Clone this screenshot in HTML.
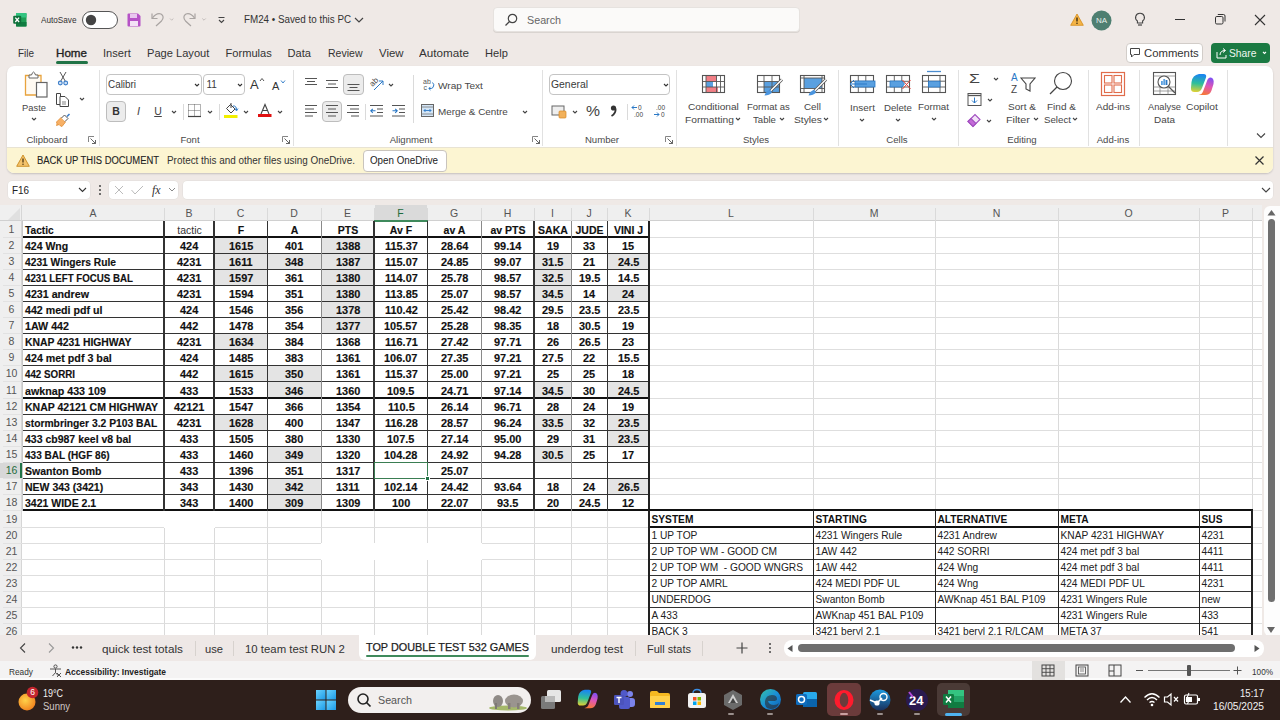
<!DOCTYPE html>
<html><head><meta charset="utf-8"><title>Excel</title><style>
*{box-sizing:border-box;margin:0;padding:0}
html,body{width:1280px;height:720px;overflow:hidden}
body{position:relative;background:#efe9e6;font-family:"Liberation Sans",sans-serif;color:#222}
.t{position:absolute;white-space:pre}
.b{position:absolute}
</style></head><body>
<div class="b" style="left:22px;top:221px;width:1240px;height:414px;background:#fff"></div><div class="b" style="left:0px;top:205px;width:1262px;height:16px;background:#efefef"></div><div class="b" style="left:0px;top:221px;width:22px;height:414px;background:#efefef"></div><div class="b" style="left:0px;top:220px;width:1262px;height:1px;background:#d0d0d0"></div><div class="b" style="left:21px;top:205px;width:1px;height:430px;background:#d6d6d6"></div><svg class="b" style="left:7px;top:207px" width="14" height="13" viewBox="0 0 14 13" fill="none"><path d="M13 1 L13 13 L1 13 Z" fill="#e0e0e0"/></svg><div class="b" style="left:164px;top:221px;width:1px;height:414px;background:#dadada"></div><div class="b" style="left:164px;top:208px;width:1px;height:13px;background:#dadada"></div><div class="b" style="left:214px;top:221px;width:1px;height:414px;background:#dadada"></div><div class="b" style="left:214px;top:208px;width:1px;height:13px;background:#dadada"></div><div class="b" style="left:267px;top:221px;width:1px;height:414px;background:#dadada"></div><div class="b" style="left:267px;top:208px;width:1px;height:13px;background:#dadada"></div><div class="b" style="left:321px;top:221px;width:1px;height:414px;background:#dadada"></div><div class="b" style="left:321px;top:208px;width:1px;height:13px;background:#dadada"></div><div class="b" style="left:374px;top:221px;width:1px;height:414px;background:#dadada"></div><div class="b" style="left:374px;top:208px;width:1px;height:13px;background:#dadada"></div><div class="b" style="left:427px;top:221px;width:1px;height:414px;background:#dadada"></div><div class="b" style="left:427px;top:208px;width:1px;height:13px;background:#dadada"></div><div class="b" style="left:481px;top:221px;width:1px;height:414px;background:#dadada"></div><div class="b" style="left:481px;top:208px;width:1px;height:13px;background:#dadada"></div><div class="b" style="left:534px;top:221px;width:1px;height:414px;background:#dadada"></div><div class="b" style="left:534px;top:208px;width:1px;height:13px;background:#dadada"></div><div class="b" style="left:571px;top:221px;width:1px;height:414px;background:#dadada"></div><div class="b" style="left:571px;top:208px;width:1px;height:13px;background:#dadada"></div><div class="b" style="left:607px;top:221px;width:1px;height:414px;background:#dadada"></div><div class="b" style="left:607px;top:208px;width:1px;height:13px;background:#dadada"></div><div class="b" style="left:649px;top:221px;width:1px;height:414px;background:#dadada"></div><div class="b" style="left:649px;top:208px;width:1px;height:13px;background:#dadada"></div><div class="b" style="left:813px;top:221px;width:1px;height:414px;background:#dadada"></div><div class="b" style="left:813px;top:208px;width:1px;height:13px;background:#dadada"></div><div class="b" style="left:935px;top:221px;width:1px;height:414px;background:#dadada"></div><div class="b" style="left:935px;top:208px;width:1px;height:13px;background:#dadada"></div><div class="b" style="left:1058px;top:221px;width:1px;height:414px;background:#dadada"></div><div class="b" style="left:1058px;top:208px;width:1px;height:13px;background:#dadada"></div><div class="b" style="left:1199px;top:221px;width:1px;height:414px;background:#dadada"></div><div class="b" style="left:1199px;top:208px;width:1px;height:13px;background:#dadada"></div><div class="b" style="left:1252px;top:221px;width:1px;height:414px;background:#dadada"></div><div class="b" style="left:1252px;top:208px;width:1px;height:13px;background:#dadada"></div><div class="b" style="left:22px;top:237px;width:1240px;height:1px;background:#dedede"></div><div class="b" style="left:3px;top:237px;width:19px;height:1px;background:#e2e2e2"></div><div class="b" style="left:22px;top:253px;width:1240px;height:1px;background:#dedede"></div><div class="b" style="left:3px;top:253px;width:19px;height:1px;background:#e2e2e2"></div><div class="b" style="left:22px;top:269px;width:1240px;height:1px;background:#dedede"></div><div class="b" style="left:3px;top:269px;width:19px;height:1px;background:#e2e2e2"></div><div class="b" style="left:22px;top:285px;width:1240px;height:1px;background:#dedede"></div><div class="b" style="left:3px;top:285px;width:19px;height:1px;background:#e2e2e2"></div><div class="b" style="left:22px;top:301px;width:1240px;height:1px;background:#dedede"></div><div class="b" style="left:3px;top:301px;width:19px;height:1px;background:#e2e2e2"></div><div class="b" style="left:22px;top:317px;width:1240px;height:1px;background:#dedede"></div><div class="b" style="left:3px;top:317px;width:19px;height:1px;background:#e2e2e2"></div><div class="b" style="left:22px;top:333px;width:1240px;height:1px;background:#dedede"></div><div class="b" style="left:3px;top:333px;width:19px;height:1px;background:#e2e2e2"></div><div class="b" style="left:22px;top:349px;width:1240px;height:1px;background:#dedede"></div><div class="b" style="left:3px;top:349px;width:19px;height:1px;background:#e2e2e2"></div><div class="b" style="left:22px;top:365px;width:1240px;height:1px;background:#dedede"></div><div class="b" style="left:3px;top:365px;width:19px;height:1px;background:#e2e2e2"></div><div class="b" style="left:22px;top:381px;width:1240px;height:1px;background:#dedede"></div><div class="b" style="left:3px;top:381px;width:19px;height:1px;background:#e2e2e2"></div><div class="b" style="left:22px;top:398px;width:1240px;height:1px;background:#dedede"></div><div class="b" style="left:3px;top:398px;width:19px;height:1px;background:#e2e2e2"></div><div class="b" style="left:22px;top:414px;width:1240px;height:1px;background:#dedede"></div><div class="b" style="left:3px;top:414px;width:19px;height:1px;background:#e2e2e2"></div><div class="b" style="left:22px;top:430px;width:1240px;height:1px;background:#dedede"></div><div class="b" style="left:3px;top:430px;width:19px;height:1px;background:#e2e2e2"></div><div class="b" style="left:22px;top:446px;width:1240px;height:1px;background:#dedede"></div><div class="b" style="left:3px;top:446px;width:19px;height:1px;background:#e2e2e2"></div><div class="b" style="left:22px;top:462px;width:1240px;height:1px;background:#dedede"></div><div class="b" style="left:3px;top:462px;width:19px;height:1px;background:#e2e2e2"></div><div class="b" style="left:22px;top:478px;width:1240px;height:1px;background:#dedede"></div><div class="b" style="left:3px;top:478px;width:19px;height:1px;background:#e2e2e2"></div><div class="b" style="left:22px;top:494px;width:1240px;height:1px;background:#dedede"></div><div class="b" style="left:3px;top:494px;width:19px;height:1px;background:#e2e2e2"></div><div class="b" style="left:22px;top:510px;width:1240px;height:1px;background:#dedede"></div><div class="b" style="left:3px;top:510px;width:19px;height:1px;background:#e2e2e2"></div><div class="b" style="left:22px;top:527px;width:1240px;height:1px;background:#dedede"></div><div class="b" style="left:3px;top:527px;width:19px;height:1px;background:#e2e2e2"></div><div class="b" style="left:22px;top:543px;width:1240px;height:1px;background:#dedede"></div><div class="b" style="left:3px;top:543px;width:19px;height:1px;background:#e2e2e2"></div><div class="b" style="left:22px;top:559px;width:1240px;height:1px;background:#dedede"></div><div class="b" style="left:3px;top:559px;width:19px;height:1px;background:#e2e2e2"></div><div class="b" style="left:22px;top:575px;width:1240px;height:1px;background:#dedede"></div><div class="b" style="left:3px;top:575px;width:19px;height:1px;background:#e2e2e2"></div><div class="b" style="left:22px;top:591px;width:1240px;height:1px;background:#dedede"></div><div class="b" style="left:3px;top:591px;width:19px;height:1px;background:#e2e2e2"></div><div class="b" style="left:22px;top:607px;width:1240px;height:1px;background:#dedede"></div><div class="b" style="left:3px;top:607px;width:19px;height:1px;background:#e2e2e2"></div><div class="b" style="left:22px;top:623px;width:1240px;height:1px;background:#dedede"></div><div class="b" style="left:3px;top:623px;width:19px;height:1px;background:#e2e2e2"></div><div class="b" style="left:375px;top:205px;width:52px;height:16px;background:#dadada"></div><div class="b" style="left:374px;top:220px;width:54px;height:1.5px;background:#3f8a5c"></div><div class="b" style="left:0px;top:463px;width:22px;height:15px;background:#d8d8d8"></div><div class="b" style="left:20px;top:463px;width:2px;height:15px;background:#217346"></div><div class="t" style="left:89.50px;top:206.82px;font-size:10.5px;line-height:12.6px;color:#555;">A</div><div class="t" style="left:185.50px;top:206.82px;font-size:10.5px;line-height:12.6px;color:#555;">B</div><div class="t" style="left:236.71px;top:206.82px;font-size:10.5px;line-height:12.6px;color:#555;">C</div><div class="t" style="left:290.21px;top:206.82px;font-size:10.5px;line-height:12.6px;color:#555;">D</div><div class="t" style="left:344.00px;top:206.82px;font-size:10.5px;line-height:12.6px;color:#555;">E</div><div class="t" style="left:397.29px;top:206.82px;font-size:10.5px;line-height:12.6px;color:#1e6b3c;">F</div><div class="t" style="left:449.92px;top:206.82px;font-size:10.5px;line-height:12.6px;color:#555;">G</div><div class="t" style="left:503.71px;top:206.82px;font-size:10.5px;line-height:12.6px;color:#555;">H</div><div class="t" style="left:551.04px;top:206.82px;font-size:10.5px;line-height:12.6px;color:#555;">I</div><div class="t" style="left:586.38px;top:206.82px;font-size:10.5px;line-height:12.6px;color:#555;">J</div><div class="t" style="left:624.50px;top:206.82px;font-size:10.5px;line-height:12.6px;color:#555;">K</div><div class="t" style="left:728.08px;top:206.82px;font-size:10.5px;line-height:12.6px;color:#555;">L</div><div class="t" style="left:869.63px;top:206.82px;font-size:10.5px;line-height:12.6px;color:#555;">M</div><div class="t" style="left:992.71px;top:206.82px;font-size:10.5px;line-height:12.6px;color:#555;">N</div><div class="t" style="left:1124.42px;top:206.82px;font-size:10.5px;line-height:12.6px;color:#555;">O</div><div class="t" style="left:1222.00px;top:206.82px;font-size:10.5px;line-height:12.6px;color:#555;">P</div><div class="t" style="left:8.58px;top:223.32px;font-size:10.5px;line-height:12.6px;color:#555;">1</div><div class="t" style="left:8.58px;top:239.32px;font-size:10.5px;line-height:12.6px;color:#555;">2</div><div class="t" style="left:8.58px;top:255.32px;font-size:10.5px;line-height:12.6px;color:#555;">3</div><div class="t" style="left:8.58px;top:271.32px;font-size:10.5px;line-height:12.6px;color:#555;">4</div><div class="t" style="left:8.58px;top:287.32px;font-size:10.5px;line-height:12.6px;color:#555;">5</div><div class="t" style="left:8.58px;top:303.32px;font-size:10.5px;line-height:12.6px;color:#555;">6</div><div class="t" style="left:8.58px;top:319.32px;font-size:10.5px;line-height:12.6px;color:#555;">7</div><div class="t" style="left:8.58px;top:335.32px;font-size:10.5px;line-height:12.6px;color:#555;">8</div><div class="t" style="left:8.58px;top:351.32px;font-size:10.5px;line-height:12.6px;color:#555;">9</div><div class="t" style="left:5.66px;top:367.32px;font-size:10.5px;line-height:12.6px;color:#555;">10</div><div class="t" style="left:6.05px;top:383.82px;font-size:10.5px;line-height:12.6px;color:#555;">11</div><div class="t" style="left:5.66px;top:400.32px;font-size:10.5px;line-height:12.6px;color:#555;">12</div><div class="t" style="left:5.66px;top:416.32px;font-size:10.5px;line-height:12.6px;color:#555;">13</div><div class="t" style="left:5.66px;top:432.32px;font-size:10.5px;line-height:12.6px;color:#555;">14</div><div class="t" style="left:5.66px;top:448.32px;font-size:10.5px;line-height:12.6px;color:#555;">15</div><div class="t" style="left:5.66px;top:464.32px;font-size:10.5px;line-height:12.6px;color:#1e6b3c;">16</div><div class="t" style="left:5.66px;top:480.32px;font-size:10.5px;line-height:12.6px;color:#555;">17</div><div class="t" style="left:5.66px;top:496.32px;font-size:10.5px;line-height:12.6px;color:#555;">18</div><div class="t" style="left:5.66px;top:512.82px;font-size:10.5px;line-height:12.6px;color:#555;">19</div><div class="t" style="left:5.66px;top:529.32px;font-size:10.5px;line-height:12.6px;color:#555;">20</div><div class="t" style="left:5.66px;top:545.32px;font-size:10.5px;line-height:12.6px;color:#555;">21</div><div class="t" style="left:5.66px;top:561.32px;font-size:10.5px;line-height:12.6px;color:#555;">22</div><div class="t" style="left:5.66px;top:577.32px;font-size:10.5px;line-height:12.6px;color:#555;">23</div><div class="t" style="left:5.66px;top:593.32px;font-size:10.5px;line-height:12.6px;color:#555;">24</div><div class="t" style="left:5.66px;top:609.32px;font-size:10.5px;line-height:12.6px;color:#555;">25</div><div class="t" style="left:5.66px;top:625.32px;font-size:10.5px;line-height:12.6px;color:#555;">26</div><div class="b" style="left:215px;top:238px;width:52px;height:15px;background:#e4e4e4"></div><div class="b" style="left:322px;top:238px;width:52px;height:15px;background:#e4e4e4"></div><div class="b" style="left:215px;top:254px;width:52px;height:15px;background:#e4e4e4"></div><div class="b" style="left:268px;top:254px;width:53px;height:15px;background:#e4e4e4"></div><div class="b" style="left:322px;top:254px;width:52px;height:15px;background:#e4e4e4"></div><div class="b" style="left:535px;top:254px;width:36px;height:15px;background:#e4e4e4"></div><div class="b" style="left:608px;top:254px;width:41px;height:15px;background:#e4e4e4"></div><div class="b" style="left:215px;top:270px;width:52px;height:15px;background:#e4e4e4"></div><div class="b" style="left:322px;top:270px;width:52px;height:15px;background:#e4e4e4"></div><div class="b" style="left:535px;top:270px;width:36px;height:15px;background:#e4e4e4"></div><div class="b" style="left:322px;top:286px;width:52px;height:15px;background:#e4e4e4"></div><div class="b" style="left:535px;top:286px;width:36px;height:15px;background:#e4e4e4"></div><div class="b" style="left:608px;top:286px;width:41px;height:15px;background:#e4e4e4"></div><div class="b" style="left:322px;top:302px;width:52px;height:15px;background:#e4e4e4"></div><div class="b" style="left:322px;top:318px;width:52px;height:15px;background:#e4e4e4"></div><div class="b" style="left:215px;top:334px;width:52px;height:15px;background:#e4e4e4"></div><div class="b" style="left:215px;top:366px;width:52px;height:15px;background:#e4e4e4"></div><div class="b" style="left:268px;top:366px;width:53px;height:15px;background:#e4e4e4"></div><div class="b" style="left:268px;top:382px;width:53px;height:16px;background:#e4e4e4"></div><div class="b" style="left:535px;top:382px;width:36px;height:16px;background:#e4e4e4"></div><div class="b" style="left:608px;top:382px;width:41px;height:16px;background:#e4e4e4"></div><div class="b" style="left:215px;top:415px;width:52px;height:15px;background:#e4e4e4"></div><div class="b" style="left:535px;top:415px;width:36px;height:15px;background:#e4e4e4"></div><div class="b" style="left:608px;top:415px;width:41px;height:15px;background:#e4e4e4"></div><div class="b" style="left:608px;top:431px;width:41px;height:15px;background:#e4e4e4"></div><div class="b" style="left:268px;top:447px;width:53px;height:15px;background:#e4e4e4"></div><div class="b" style="left:535px;top:447px;width:36px;height:15px;background:#e4e4e4"></div><div class="b" style="left:268px;top:479px;width:53px;height:15px;background:#e4e4e4"></div><div class="b" style="left:608px;top:479px;width:41px;height:15px;background:#e4e4e4"></div><div class="b" style="left:268px;top:495px;width:53px;height:15px;background:#e4e4e4"></div><div class="b" style="left:22px;top:236px;width:628px;height:2px;background:#111"></div><div class="b" style="left:22px;top:253px;width:628px;height:1px;background:#333"></div><div class="b" style="left:22px;top:269px;width:628px;height:1px;background:#333"></div><div class="b" style="left:22px;top:285px;width:628px;height:1px;background:#333"></div><div class="b" style="left:22px;top:301px;width:628px;height:1px;background:#333"></div><div class="b" style="left:22px;top:317px;width:628px;height:1px;background:#333"></div><div class="b" style="left:22px;top:333px;width:628px;height:1px;background:#333"></div><div class="b" style="left:22px;top:349px;width:628px;height:1px;background:#333"></div><div class="b" style="left:22px;top:365px;width:628px;height:1px;background:#333"></div><div class="b" style="left:22px;top:381px;width:628px;height:1px;background:#333"></div><div class="b" style="left:22px;top:397px;width:628px;height:2px;background:#111"></div><div class="b" style="left:22px;top:414px;width:628px;height:1px;background:#333"></div><div class="b" style="left:22px;top:430px;width:628px;height:1px;background:#333"></div><div class="b" style="left:22px;top:446px;width:628px;height:1px;background:#333"></div><div class="b" style="left:22px;top:462px;width:628px;height:1px;background:#333"></div><div class="b" style="left:22px;top:478px;width:628px;height:1px;background:#333"></div><div class="b" style="left:22px;top:494px;width:628px;height:1px;background:#333"></div><div class="b" style="left:22px;top:509px;width:628px;height:2px;background:#111"></div><div class="b" style="left:22px;top:221px;width:1px;height:290px;background:#c8c8c8"></div><div class="b" style="left:163px;top:221px;width:2px;height:290px;background:#333"></div><div class="b" style="left:213px;top:221px;width:2px;height:290px;background:#333"></div><div class="b" style="left:267px;top:221px;width:1px;height:290px;background:#333"></div><div class="b" style="left:321px;top:221px;width:1px;height:290px;background:#8a8a8a"></div><div class="b" style="left:373px;top:221px;width:2px;height:290px;background:#333"></div><div class="b" style="left:427px;top:221px;width:1px;height:290px;background:#333"></div><div class="b" style="left:481px;top:221px;width:1px;height:290px;background:#8a8a8a"></div><div class="b" style="left:533px;top:221px;width:2px;height:290px;background:#333"></div><div class="b" style="left:571px;top:221px;width:1px;height:290px;background:#8a8a8a"></div><div class="b" style="left:607px;top:221px;width:1px;height:290px;background:#333"></div><div class="b" style="left:648px;top:221px;width:2px;height:290px;background:#222"></div><div class="t" style="left:25.00px;top:224.02px;font-size:10.5px;line-height:12.6px;color:#111;font-weight:bold;transform:scaleX(0.971);transform-origin:0 0;-webkit-text-stroke:0.15px #111;">Tactic</div><div class="t" style="left:177.25px;top:224.02px;font-size:10.5px;line-height:12.6px;color:#333;">tactic</div><div class="t" style="left:237.79px;top:224.02px;font-size:10.5px;line-height:12.6px;color:#111;font-weight:bold;-webkit-text-stroke:0.15px #111;">F</div><div class="t" style="left:290.71px;top:224.02px;font-size:10.5px;line-height:12.6px;color:#111;font-weight:bold;-webkit-text-stroke:0.15px #111;">A</div><div class="t" style="left:337.79px;top:224.02px;font-size:10.5px;line-height:12.6px;color:#111;font-weight:bold;-webkit-text-stroke:0.15px #111;">PTS</div><div class="t" style="left:389.82px;top:224.02px;font-size:10.5px;line-height:12.6px;color:#111;font-weight:bold;-webkit-text-stroke:0.15px #111;">Av F</div><div class="t" style="left:443.61px;top:224.02px;font-size:10.5px;line-height:12.6px;color:#111;font-weight:bold;-webkit-text-stroke:0.15px #111;">av A</div><div class="t" style="left:490.49px;top:224.02px;font-size:10.5px;line-height:12.6px;color:#111;font-weight:bold;-webkit-text-stroke:0.15px #111;">av PTS</div><div class="t" style="left:538.12px;top:224.02px;font-size:10.5px;line-height:12.6px;color:#111;font-weight:bold;-webkit-text-stroke:0.15px #111;">SAKA</div><div class="t" style="left:575.50px;top:224.02px;font-size:10.5px;line-height:12.6px;color:#111;font-weight:bold;-webkit-text-stroke:0.15px #111;">JUDE</div><div class="t" style="left:613.91px;top:224.02px;font-size:10.5px;line-height:12.6px;color:#111;font-weight:bold;-webkit-text-stroke:0.15px #111;">VINI J</div><div class="t" style="left:25.00px;top:240.02px;font-size:10.5px;line-height:12.6px;color:#111;font-weight:bold;-webkit-text-stroke:0.15px #111;">424 Wng</div><div class="t" style="left:180.39px;top:240.02px;font-size:10.5px;line-height:12.6px;color:#111;font-weight:bold;transform:scaleX(1.040);transform-origin:0 0;-webkit-text-stroke:0.15px #111;">424</div><div class="t" style="left:228.85px;top:240.02px;font-size:10.5px;line-height:12.6px;color:#111;font-weight:bold;transform:scaleX(1.040);transform-origin:0 0;-webkit-text-stroke:0.15px #111;">1615</div><div class="t" style="left:285.39px;top:240.02px;font-size:10.5px;line-height:12.6px;color:#111;font-weight:bold;transform:scaleX(1.040);transform-origin:0 0;-webkit-text-stroke:0.15px #111;">401</div><div class="t" style="left:335.85px;top:240.02px;font-size:10.5px;line-height:12.6px;color:#111;font-weight:bold;transform:scaleX(1.040);transform-origin:0 0;-webkit-text-stroke:0.15px #111;">1388</div><div class="t" style="left:384.60px;top:240.02px;font-size:10.5px;line-height:12.6px;color:#111;font-weight:bold;transform:scaleX(1.040);transform-origin:0 0;-webkit-text-stroke:0.15px #111;">115.37</div><div class="t" style="left:440.84px;top:240.02px;font-size:10.5px;line-height:12.6px;color:#111;font-weight:bold;transform:scaleX(1.040);transform-origin:0 0;-webkit-text-stroke:0.15px #111;">28.64</div><div class="t" style="left:494.34px;top:240.02px;font-size:10.5px;line-height:12.6px;color:#111;font-weight:bold;transform:scaleX(1.040);transform-origin:0 0;-webkit-text-stroke:0.15px #111;">99.14</div><div class="t" style="left:546.93px;top:240.02px;font-size:10.5px;line-height:12.6px;color:#111;font-weight:bold;transform:scaleX(1.040);transform-origin:0 0;-webkit-text-stroke:0.15px #111;">19</div><div class="t" style="left:583.43px;top:240.02px;font-size:10.5px;line-height:12.6px;color:#111;font-weight:bold;transform:scaleX(1.040);transform-origin:0 0;-webkit-text-stroke:0.15px #111;">33</div><div class="t" style="left:622.43px;top:240.02px;font-size:10.5px;line-height:12.6px;color:#111;font-weight:bold;transform:scaleX(1.040);transform-origin:0 0;-webkit-text-stroke:0.15px #111;">15</div><div class="t" style="left:25.00px;top:256.02px;font-size:10.5px;line-height:12.6px;color:#111;font-weight:bold;transform:scaleX(0.975);transform-origin:0 0;-webkit-text-stroke:0.15px #111;">4231 Wingers Rule</div><div class="t" style="left:177.35px;top:256.02px;font-size:10.5px;line-height:12.6px;color:#111;font-weight:bold;transform:scaleX(1.040);transform-origin:0 0;-webkit-text-stroke:0.15px #111;">4231</div><div class="t" style="left:229.15px;top:256.02px;font-size:10.5px;line-height:12.6px;color:#111;font-weight:bold;transform:scaleX(1.040);transform-origin:0 0;-webkit-text-stroke:0.15px #111;">1611</div><div class="t" style="left:285.39px;top:256.02px;font-size:10.5px;line-height:12.6px;color:#111;font-weight:bold;transform:scaleX(1.040);transform-origin:0 0;-webkit-text-stroke:0.15px #111;">348</div><div class="t" style="left:335.85px;top:256.02px;font-size:10.5px;line-height:12.6px;color:#111;font-weight:bold;transform:scaleX(1.040);transform-origin:0 0;-webkit-text-stroke:0.15px #111;">1387</div><div class="t" style="left:384.60px;top:256.02px;font-size:10.5px;line-height:12.6px;color:#111;font-weight:bold;transform:scaleX(1.040);transform-origin:0 0;-webkit-text-stroke:0.15px #111;">115.07</div><div class="t" style="left:440.84px;top:256.02px;font-size:10.5px;line-height:12.6px;color:#111;font-weight:bold;transform:scaleX(1.040);transform-origin:0 0;-webkit-text-stroke:0.15px #111;">24.85</div><div class="t" style="left:494.34px;top:256.02px;font-size:10.5px;line-height:12.6px;color:#111;font-weight:bold;transform:scaleX(1.040);transform-origin:0 0;-webkit-text-stroke:0.15px #111;">99.07</div><div class="t" style="left:542.37px;top:256.02px;font-size:10.5px;line-height:12.6px;color:#111;font-weight:bold;transform:scaleX(1.040);transform-origin:0 0;-webkit-text-stroke:0.15px #111;">31.5</div><div class="t" style="left:583.43px;top:256.02px;font-size:10.5px;line-height:12.6px;color:#111;font-weight:bold;transform:scaleX(1.040);transform-origin:0 0;-webkit-text-stroke:0.15px #111;">21</div><div class="t" style="left:617.87px;top:256.02px;font-size:10.5px;line-height:12.6px;color:#111;font-weight:bold;transform:scaleX(1.040);transform-origin:0 0;-webkit-text-stroke:0.15px #111;">24.5</div><div class="t" style="left:25.00px;top:272.02px;font-size:10.5px;line-height:12.6px;color:#111;font-weight:bold;transform:scaleX(0.925);transform-origin:0 0;-webkit-text-stroke:0.15px #111;">4231 LEFT FOCUS BAL</div><div class="t" style="left:177.35px;top:272.02px;font-size:10.5px;line-height:12.6px;color:#111;font-weight:bold;transform:scaleX(1.040);transform-origin:0 0;-webkit-text-stroke:0.15px #111;">4231</div><div class="t" style="left:228.85px;top:272.02px;font-size:10.5px;line-height:12.6px;color:#111;font-weight:bold;transform:scaleX(1.040);transform-origin:0 0;-webkit-text-stroke:0.15px #111;">1597</div><div class="t" style="left:285.39px;top:272.02px;font-size:10.5px;line-height:12.6px;color:#111;font-weight:bold;transform:scaleX(1.040);transform-origin:0 0;-webkit-text-stroke:0.15px #111;">361</div><div class="t" style="left:335.85px;top:272.02px;font-size:10.5px;line-height:12.6px;color:#111;font-weight:bold;transform:scaleX(1.040);transform-origin:0 0;-webkit-text-stroke:0.15px #111;">1380</div><div class="t" style="left:384.60px;top:272.02px;font-size:10.5px;line-height:12.6px;color:#111;font-weight:bold;transform:scaleX(1.040);transform-origin:0 0;-webkit-text-stroke:0.15px #111;">114.07</div><div class="t" style="left:440.84px;top:272.02px;font-size:10.5px;line-height:12.6px;color:#111;font-weight:bold;transform:scaleX(1.040);transform-origin:0 0;-webkit-text-stroke:0.15px #111;">25.78</div><div class="t" style="left:494.34px;top:272.02px;font-size:10.5px;line-height:12.6px;color:#111;font-weight:bold;transform:scaleX(1.040);transform-origin:0 0;-webkit-text-stroke:0.15px #111;">98.57</div><div class="t" style="left:542.37px;top:272.02px;font-size:10.5px;line-height:12.6px;color:#111;font-weight:bold;transform:scaleX(1.040);transform-origin:0 0;-webkit-text-stroke:0.15px #111;">32.5</div><div class="t" style="left:578.87px;top:272.02px;font-size:10.5px;line-height:12.6px;color:#111;font-weight:bold;transform:scaleX(1.040);transform-origin:0 0;-webkit-text-stroke:0.15px #111;">19.5</div><div class="t" style="left:617.87px;top:272.02px;font-size:10.5px;line-height:12.6px;color:#111;font-weight:bold;transform:scaleX(1.040);transform-origin:0 0;-webkit-text-stroke:0.15px #111;">14.5</div><div class="t" style="left:25.00px;top:288.02px;font-size:10.5px;line-height:12.6px;color:#111;font-weight:bold;transform:scaleX(1.015);transform-origin:0 0;-webkit-text-stroke:0.15px #111;">4231 andrew</div><div class="t" style="left:177.35px;top:288.02px;font-size:10.5px;line-height:12.6px;color:#111;font-weight:bold;transform:scaleX(1.040);transform-origin:0 0;-webkit-text-stroke:0.15px #111;">4231</div><div class="t" style="left:228.85px;top:288.02px;font-size:10.5px;line-height:12.6px;color:#111;font-weight:bold;transform:scaleX(1.040);transform-origin:0 0;-webkit-text-stroke:0.15px #111;">1594</div><div class="t" style="left:285.39px;top:288.02px;font-size:10.5px;line-height:12.6px;color:#111;font-weight:bold;transform:scaleX(1.040);transform-origin:0 0;-webkit-text-stroke:0.15px #111;">351</div><div class="t" style="left:335.85px;top:288.02px;font-size:10.5px;line-height:12.6px;color:#111;font-weight:bold;transform:scaleX(1.040);transform-origin:0 0;-webkit-text-stroke:0.15px #111;">1380</div><div class="t" style="left:384.60px;top:288.02px;font-size:10.5px;line-height:12.6px;color:#111;font-weight:bold;transform:scaleX(1.040);transform-origin:0 0;-webkit-text-stroke:0.15px #111;">113.85</div><div class="t" style="left:440.84px;top:288.02px;font-size:10.5px;line-height:12.6px;color:#111;font-weight:bold;transform:scaleX(1.040);transform-origin:0 0;-webkit-text-stroke:0.15px #111;">25.07</div><div class="t" style="left:494.34px;top:288.02px;font-size:10.5px;line-height:12.6px;color:#111;font-weight:bold;transform:scaleX(1.040);transform-origin:0 0;-webkit-text-stroke:0.15px #111;">98.57</div><div class="t" style="left:542.37px;top:288.02px;font-size:10.5px;line-height:12.6px;color:#111;font-weight:bold;transform:scaleX(1.040);transform-origin:0 0;-webkit-text-stroke:0.15px #111;">34.5</div><div class="t" style="left:583.43px;top:288.02px;font-size:10.5px;line-height:12.6px;color:#111;font-weight:bold;transform:scaleX(1.040);transform-origin:0 0;-webkit-text-stroke:0.15px #111;">14</div><div class="t" style="left:622.43px;top:288.02px;font-size:10.5px;line-height:12.6px;color:#111;font-weight:bold;transform:scaleX(1.040);transform-origin:0 0;-webkit-text-stroke:0.15px #111;">24</div><div class="t" style="left:25.00px;top:304.02px;font-size:10.5px;line-height:12.6px;color:#111;font-weight:bold;transform:scaleX(1.013);transform-origin:0 0;-webkit-text-stroke:0.15px #111;">442 medi pdf ul</div><div class="t" style="left:180.39px;top:304.02px;font-size:10.5px;line-height:12.6px;color:#111;font-weight:bold;transform:scaleX(1.040);transform-origin:0 0;-webkit-text-stroke:0.15px #111;">424</div><div class="t" style="left:228.85px;top:304.02px;font-size:10.5px;line-height:12.6px;color:#111;font-weight:bold;transform:scaleX(1.040);transform-origin:0 0;-webkit-text-stroke:0.15px #111;">1546</div><div class="t" style="left:285.39px;top:304.02px;font-size:10.5px;line-height:12.6px;color:#111;font-weight:bold;transform:scaleX(1.040);transform-origin:0 0;-webkit-text-stroke:0.15px #111;">356</div><div class="t" style="left:335.85px;top:304.02px;font-size:10.5px;line-height:12.6px;color:#111;font-weight:bold;transform:scaleX(1.040);transform-origin:0 0;-webkit-text-stroke:0.15px #111;">1378</div><div class="t" style="left:384.60px;top:304.02px;font-size:10.5px;line-height:12.6px;color:#111;font-weight:bold;transform:scaleX(1.040);transform-origin:0 0;-webkit-text-stroke:0.15px #111;">110.42</div><div class="t" style="left:440.84px;top:304.02px;font-size:10.5px;line-height:12.6px;color:#111;font-weight:bold;transform:scaleX(1.040);transform-origin:0 0;-webkit-text-stroke:0.15px #111;">25.42</div><div class="t" style="left:494.34px;top:304.02px;font-size:10.5px;line-height:12.6px;color:#111;font-weight:bold;transform:scaleX(1.040);transform-origin:0 0;-webkit-text-stroke:0.15px #111;">98.42</div><div class="t" style="left:542.37px;top:304.02px;font-size:10.5px;line-height:12.6px;color:#111;font-weight:bold;transform:scaleX(1.040);transform-origin:0 0;-webkit-text-stroke:0.15px #111;">29.5</div><div class="t" style="left:578.87px;top:304.02px;font-size:10.5px;line-height:12.6px;color:#111;font-weight:bold;transform:scaleX(1.040);transform-origin:0 0;-webkit-text-stroke:0.15px #111;">23.5</div><div class="t" style="left:617.87px;top:304.02px;font-size:10.5px;line-height:12.6px;color:#111;font-weight:bold;transform:scaleX(1.040);transform-origin:0 0;-webkit-text-stroke:0.15px #111;">23.5</div><div class="t" style="left:25.00px;top:320.02px;font-size:10.5px;line-height:12.6px;color:#111;font-weight:bold;transform:scaleX(1.018);transform-origin:0 0;-webkit-text-stroke:0.15px #111;">1AW 442</div><div class="t" style="left:180.39px;top:320.02px;font-size:10.5px;line-height:12.6px;color:#111;font-weight:bold;transform:scaleX(1.040);transform-origin:0 0;-webkit-text-stroke:0.15px #111;">442</div><div class="t" style="left:228.85px;top:320.02px;font-size:10.5px;line-height:12.6px;color:#111;font-weight:bold;transform:scaleX(1.040);transform-origin:0 0;-webkit-text-stroke:0.15px #111;">1478</div><div class="t" style="left:285.39px;top:320.02px;font-size:10.5px;line-height:12.6px;color:#111;font-weight:bold;transform:scaleX(1.040);transform-origin:0 0;-webkit-text-stroke:0.15px #111;">354</div><div class="t" style="left:335.85px;top:320.02px;font-size:10.5px;line-height:12.6px;color:#111;font-weight:bold;transform:scaleX(1.040);transform-origin:0 0;-webkit-text-stroke:0.15px #111;">1377</div><div class="t" style="left:384.30px;top:320.02px;font-size:10.5px;line-height:12.6px;color:#111;font-weight:bold;transform:scaleX(1.040);transform-origin:0 0;-webkit-text-stroke:0.15px #111;">105.57</div><div class="t" style="left:440.84px;top:320.02px;font-size:10.5px;line-height:12.6px;color:#111;font-weight:bold;transform:scaleX(1.040);transform-origin:0 0;-webkit-text-stroke:0.15px #111;">25.28</div><div class="t" style="left:494.34px;top:320.02px;font-size:10.5px;line-height:12.6px;color:#111;font-weight:bold;transform:scaleX(1.040);transform-origin:0 0;-webkit-text-stroke:0.15px #111;">98.35</div><div class="t" style="left:546.93px;top:320.02px;font-size:10.5px;line-height:12.6px;color:#111;font-weight:bold;transform:scaleX(1.040);transform-origin:0 0;-webkit-text-stroke:0.15px #111;">18</div><div class="t" style="left:578.87px;top:320.02px;font-size:10.5px;line-height:12.6px;color:#111;font-weight:bold;transform:scaleX(1.040);transform-origin:0 0;-webkit-text-stroke:0.15px #111;">30.5</div><div class="t" style="left:622.43px;top:320.02px;font-size:10.5px;line-height:12.6px;color:#111;font-weight:bold;transform:scaleX(1.040);transform-origin:0 0;-webkit-text-stroke:0.15px #111;">19</div><div class="t" style="left:25.00px;top:336.02px;font-size:10.5px;line-height:12.6px;color:#111;font-weight:bold;transform:scaleX(0.986);transform-origin:0 0;-webkit-text-stroke:0.15px #111;">KNAP 4231 HIGHWAY</div><div class="t" style="left:177.35px;top:336.02px;font-size:10.5px;line-height:12.6px;color:#111;font-weight:bold;transform:scaleX(1.040);transform-origin:0 0;-webkit-text-stroke:0.15px #111;">4231</div><div class="t" style="left:228.85px;top:336.02px;font-size:10.5px;line-height:12.6px;color:#111;font-weight:bold;transform:scaleX(1.040);transform-origin:0 0;-webkit-text-stroke:0.15px #111;">1634</div><div class="t" style="left:285.39px;top:336.02px;font-size:10.5px;line-height:12.6px;color:#111;font-weight:bold;transform:scaleX(1.040);transform-origin:0 0;-webkit-text-stroke:0.15px #111;">384</div><div class="t" style="left:335.85px;top:336.02px;font-size:10.5px;line-height:12.6px;color:#111;font-weight:bold;transform:scaleX(1.040);transform-origin:0 0;-webkit-text-stroke:0.15px #111;">1368</div><div class="t" style="left:384.60px;top:336.02px;font-size:10.5px;line-height:12.6px;color:#111;font-weight:bold;transform:scaleX(1.040);transform-origin:0 0;-webkit-text-stroke:0.15px #111;">116.71</div><div class="t" style="left:440.84px;top:336.02px;font-size:10.5px;line-height:12.6px;color:#111;font-weight:bold;transform:scaleX(1.040);transform-origin:0 0;-webkit-text-stroke:0.15px #111;">27.42</div><div class="t" style="left:494.34px;top:336.02px;font-size:10.5px;line-height:12.6px;color:#111;font-weight:bold;transform:scaleX(1.040);transform-origin:0 0;-webkit-text-stroke:0.15px #111;">97.71</div><div class="t" style="left:546.93px;top:336.02px;font-size:10.5px;line-height:12.6px;color:#111;font-weight:bold;transform:scaleX(1.040);transform-origin:0 0;-webkit-text-stroke:0.15px #111;">26</div><div class="t" style="left:578.87px;top:336.02px;font-size:10.5px;line-height:12.6px;color:#111;font-weight:bold;transform:scaleX(1.040);transform-origin:0 0;-webkit-text-stroke:0.15px #111;">26.5</div><div class="t" style="left:622.43px;top:336.02px;font-size:10.5px;line-height:12.6px;color:#111;font-weight:bold;transform:scaleX(1.040);transform-origin:0 0;-webkit-text-stroke:0.15px #111;">23</div><div class="t" style="left:25.00px;top:352.02px;font-size:10.5px;line-height:12.6px;color:#111;font-weight:bold;transform:scaleX(1.019);transform-origin:0 0;-webkit-text-stroke:0.15px #111;">424 met pdf 3 bal</div><div class="t" style="left:180.39px;top:352.02px;font-size:10.5px;line-height:12.6px;color:#111;font-weight:bold;transform:scaleX(1.040);transform-origin:0 0;-webkit-text-stroke:0.15px #111;">424</div><div class="t" style="left:228.85px;top:352.02px;font-size:10.5px;line-height:12.6px;color:#111;font-weight:bold;transform:scaleX(1.040);transform-origin:0 0;-webkit-text-stroke:0.15px #111;">1485</div><div class="t" style="left:285.39px;top:352.02px;font-size:10.5px;line-height:12.6px;color:#111;font-weight:bold;transform:scaleX(1.040);transform-origin:0 0;-webkit-text-stroke:0.15px #111;">383</div><div class="t" style="left:335.85px;top:352.02px;font-size:10.5px;line-height:12.6px;color:#111;font-weight:bold;transform:scaleX(1.040);transform-origin:0 0;-webkit-text-stroke:0.15px #111;">1361</div><div class="t" style="left:384.30px;top:352.02px;font-size:10.5px;line-height:12.6px;color:#111;font-weight:bold;transform:scaleX(1.040);transform-origin:0 0;-webkit-text-stroke:0.15px #111;">106.07</div><div class="t" style="left:440.84px;top:352.02px;font-size:10.5px;line-height:12.6px;color:#111;font-weight:bold;transform:scaleX(1.040);transform-origin:0 0;-webkit-text-stroke:0.15px #111;">27.35</div><div class="t" style="left:494.34px;top:352.02px;font-size:10.5px;line-height:12.6px;color:#111;font-weight:bold;transform:scaleX(1.040);transform-origin:0 0;-webkit-text-stroke:0.15px #111;">97.21</div><div class="t" style="left:542.37px;top:352.02px;font-size:10.5px;line-height:12.6px;color:#111;font-weight:bold;transform:scaleX(1.040);transform-origin:0 0;-webkit-text-stroke:0.15px #111;">27.5</div><div class="t" style="left:583.43px;top:352.02px;font-size:10.5px;line-height:12.6px;color:#111;font-weight:bold;transform:scaleX(1.040);transform-origin:0 0;-webkit-text-stroke:0.15px #111;">22</div><div class="t" style="left:617.87px;top:352.02px;font-size:10.5px;line-height:12.6px;color:#111;font-weight:bold;transform:scaleX(1.040);transform-origin:0 0;-webkit-text-stroke:0.15px #111;">15.5</div><div class="t" style="left:25.00px;top:368.02px;font-size:10.5px;line-height:12.6px;color:#111;font-weight:bold;transform:scaleX(0.931);transform-origin:0 0;-webkit-text-stroke:0.15px #111;">442 SORRI</div><div class="t" style="left:180.39px;top:368.02px;font-size:10.5px;line-height:12.6px;color:#111;font-weight:bold;transform:scaleX(1.040);transform-origin:0 0;-webkit-text-stroke:0.15px #111;">442</div><div class="t" style="left:228.85px;top:368.02px;font-size:10.5px;line-height:12.6px;color:#111;font-weight:bold;transform:scaleX(1.040);transform-origin:0 0;-webkit-text-stroke:0.15px #111;">1615</div><div class="t" style="left:285.39px;top:368.02px;font-size:10.5px;line-height:12.6px;color:#111;font-weight:bold;transform:scaleX(1.040);transform-origin:0 0;-webkit-text-stroke:0.15px #111;">350</div><div class="t" style="left:335.85px;top:368.02px;font-size:10.5px;line-height:12.6px;color:#111;font-weight:bold;transform:scaleX(1.040);transform-origin:0 0;-webkit-text-stroke:0.15px #111;">1361</div><div class="t" style="left:384.60px;top:368.02px;font-size:10.5px;line-height:12.6px;color:#111;font-weight:bold;transform:scaleX(1.040);transform-origin:0 0;-webkit-text-stroke:0.15px #111;">115.37</div><div class="t" style="left:440.84px;top:368.02px;font-size:10.5px;line-height:12.6px;color:#111;font-weight:bold;transform:scaleX(1.040);transform-origin:0 0;-webkit-text-stroke:0.15px #111;">25.00</div><div class="t" style="left:494.34px;top:368.02px;font-size:10.5px;line-height:12.6px;color:#111;font-weight:bold;transform:scaleX(1.040);transform-origin:0 0;-webkit-text-stroke:0.15px #111;">97.21</div><div class="t" style="left:546.93px;top:368.02px;font-size:10.5px;line-height:12.6px;color:#111;font-weight:bold;transform:scaleX(1.040);transform-origin:0 0;-webkit-text-stroke:0.15px #111;">25</div><div class="t" style="left:583.43px;top:368.02px;font-size:10.5px;line-height:12.6px;color:#111;font-weight:bold;transform:scaleX(1.040);transform-origin:0 0;-webkit-text-stroke:0.15px #111;">25</div><div class="t" style="left:622.43px;top:368.02px;font-size:10.5px;line-height:12.6px;color:#111;font-weight:bold;transform:scaleX(1.040);transform-origin:0 0;-webkit-text-stroke:0.15px #111;">18</div><div class="t" style="left:25.00px;top:384.52px;font-size:10.5px;line-height:12.6px;color:#111;font-weight:bold;transform:scaleX(1.019);transform-origin:0 0;-webkit-text-stroke:0.15px #111;">awknap 433 109</div><div class="t" style="left:180.39px;top:384.52px;font-size:10.5px;line-height:12.6px;color:#111;font-weight:bold;transform:scaleX(1.040);transform-origin:0 0;-webkit-text-stroke:0.15px #111;">433</div><div class="t" style="left:228.85px;top:384.52px;font-size:10.5px;line-height:12.6px;color:#111;font-weight:bold;transform:scaleX(1.040);transform-origin:0 0;-webkit-text-stroke:0.15px #111;">1533</div><div class="t" style="left:285.39px;top:384.52px;font-size:10.5px;line-height:12.6px;color:#111;font-weight:bold;transform:scaleX(1.040);transform-origin:0 0;-webkit-text-stroke:0.15px #111;">346</div><div class="t" style="left:335.85px;top:384.52px;font-size:10.5px;line-height:12.6px;color:#111;font-weight:bold;transform:scaleX(1.040);transform-origin:0 0;-webkit-text-stroke:0.15px #111;">1360</div><div class="t" style="left:387.34px;top:384.52px;font-size:10.5px;line-height:12.6px;color:#111;font-weight:bold;transform:scaleX(1.040);transform-origin:0 0;-webkit-text-stroke:0.15px #111;">109.5</div><div class="t" style="left:440.84px;top:384.52px;font-size:10.5px;line-height:12.6px;color:#111;font-weight:bold;transform:scaleX(1.040);transform-origin:0 0;-webkit-text-stroke:0.15px #111;">24.71</div><div class="t" style="left:494.34px;top:384.52px;font-size:10.5px;line-height:12.6px;color:#111;font-weight:bold;transform:scaleX(1.040);transform-origin:0 0;-webkit-text-stroke:0.15px #111;">97.14</div><div class="t" style="left:542.37px;top:384.52px;font-size:10.5px;line-height:12.6px;color:#111;font-weight:bold;transform:scaleX(1.040);transform-origin:0 0;-webkit-text-stroke:0.15px #111;">34.5</div><div class="t" style="left:583.43px;top:384.52px;font-size:10.5px;line-height:12.6px;color:#111;font-weight:bold;transform:scaleX(1.040);transform-origin:0 0;-webkit-text-stroke:0.15px #111;">30</div><div class="t" style="left:617.87px;top:384.52px;font-size:10.5px;line-height:12.6px;color:#111;font-weight:bold;transform:scaleX(1.040);transform-origin:0 0;-webkit-text-stroke:0.15px #111;">24.5</div><div class="t" style="left:25.00px;top:401.02px;font-size:10.5px;line-height:12.6px;color:#111;font-weight:bold;-webkit-text-stroke:0.15px #111;">KNAP 42121 CM HIGHWAY</div><div class="t" style="left:174.32px;top:401.02px;font-size:10.5px;line-height:12.6px;color:#111;font-weight:bold;transform:scaleX(1.040);transform-origin:0 0;-webkit-text-stroke:0.15px #111;">42121</div><div class="t" style="left:228.85px;top:401.02px;font-size:10.5px;line-height:12.6px;color:#111;font-weight:bold;transform:scaleX(1.040);transform-origin:0 0;-webkit-text-stroke:0.15px #111;">1547</div><div class="t" style="left:285.39px;top:401.02px;font-size:10.5px;line-height:12.6px;color:#111;font-weight:bold;transform:scaleX(1.040);transform-origin:0 0;-webkit-text-stroke:0.15px #111;">366</div><div class="t" style="left:335.85px;top:401.02px;font-size:10.5px;line-height:12.6px;color:#111;font-weight:bold;transform:scaleX(1.040);transform-origin:0 0;-webkit-text-stroke:0.15px #111;">1354</div><div class="t" style="left:387.64px;top:401.02px;font-size:10.5px;line-height:12.6px;color:#111;font-weight:bold;transform:scaleX(1.040);transform-origin:0 0;-webkit-text-stroke:0.15px #111;">110.5</div><div class="t" style="left:440.84px;top:401.02px;font-size:10.5px;line-height:12.6px;color:#111;font-weight:bold;transform:scaleX(1.040);transform-origin:0 0;-webkit-text-stroke:0.15px #111;">26.14</div><div class="t" style="left:494.34px;top:401.02px;font-size:10.5px;line-height:12.6px;color:#111;font-weight:bold;transform:scaleX(1.040);transform-origin:0 0;-webkit-text-stroke:0.15px #111;">96.71</div><div class="t" style="left:546.93px;top:401.02px;font-size:10.5px;line-height:12.6px;color:#111;font-weight:bold;transform:scaleX(1.040);transform-origin:0 0;-webkit-text-stroke:0.15px #111;">28</div><div class="t" style="left:583.43px;top:401.02px;font-size:10.5px;line-height:12.6px;color:#111;font-weight:bold;transform:scaleX(1.040);transform-origin:0 0;-webkit-text-stroke:0.15px #111;">24</div><div class="t" style="left:622.43px;top:401.02px;font-size:10.5px;line-height:12.6px;color:#111;font-weight:bold;transform:scaleX(1.040);transform-origin:0 0;-webkit-text-stroke:0.15px #111;">19</div><div class="t" style="left:25.00px;top:417.02px;font-size:10.5px;line-height:12.6px;color:#111;font-weight:bold;transform:scaleX(0.981);transform-origin:0 0;-webkit-text-stroke:0.15px #111;">stormbringer 3.2 P103 BAL</div><div class="t" style="left:177.35px;top:417.02px;font-size:10.5px;line-height:12.6px;color:#111;font-weight:bold;transform:scaleX(1.040);transform-origin:0 0;-webkit-text-stroke:0.15px #111;">4231</div><div class="t" style="left:228.85px;top:417.02px;font-size:10.5px;line-height:12.6px;color:#111;font-weight:bold;transform:scaleX(1.040);transform-origin:0 0;-webkit-text-stroke:0.15px #111;">1628</div><div class="t" style="left:285.39px;top:417.02px;font-size:10.5px;line-height:12.6px;color:#111;font-weight:bold;transform:scaleX(1.040);transform-origin:0 0;-webkit-text-stroke:0.15px #111;">400</div><div class="t" style="left:335.85px;top:417.02px;font-size:10.5px;line-height:12.6px;color:#111;font-weight:bold;transform:scaleX(1.040);transform-origin:0 0;-webkit-text-stroke:0.15px #111;">1347</div><div class="t" style="left:384.60px;top:417.02px;font-size:10.5px;line-height:12.6px;color:#111;font-weight:bold;transform:scaleX(1.040);transform-origin:0 0;-webkit-text-stroke:0.15px #111;">116.28</div><div class="t" style="left:440.84px;top:417.02px;font-size:10.5px;line-height:12.6px;color:#111;font-weight:bold;transform:scaleX(1.040);transform-origin:0 0;-webkit-text-stroke:0.15px #111;">28.57</div><div class="t" style="left:494.34px;top:417.02px;font-size:10.5px;line-height:12.6px;color:#111;font-weight:bold;transform:scaleX(1.040);transform-origin:0 0;-webkit-text-stroke:0.15px #111;">96.24</div><div class="t" style="left:542.37px;top:417.02px;font-size:10.5px;line-height:12.6px;color:#111;font-weight:bold;transform:scaleX(1.040);transform-origin:0 0;-webkit-text-stroke:0.15px #111;">33.5</div><div class="t" style="left:583.43px;top:417.02px;font-size:10.5px;line-height:12.6px;color:#111;font-weight:bold;transform:scaleX(1.040);transform-origin:0 0;-webkit-text-stroke:0.15px #111;">32</div><div class="t" style="left:617.87px;top:417.02px;font-size:10.5px;line-height:12.6px;color:#111;font-weight:bold;transform:scaleX(1.040);transform-origin:0 0;-webkit-text-stroke:0.15px #111;">23.5</div><div class="t" style="left:25.00px;top:433.02px;font-size:10.5px;line-height:12.6px;color:#111;font-weight:bold;-webkit-text-stroke:0.15px #111;">433 cb987 keel v8 bal</div><div class="t" style="left:180.39px;top:433.02px;font-size:10.5px;line-height:12.6px;color:#111;font-weight:bold;transform:scaleX(1.040);transform-origin:0 0;-webkit-text-stroke:0.15px #111;">433</div><div class="t" style="left:228.85px;top:433.02px;font-size:10.5px;line-height:12.6px;color:#111;font-weight:bold;transform:scaleX(1.040);transform-origin:0 0;-webkit-text-stroke:0.15px #111;">1505</div><div class="t" style="left:285.39px;top:433.02px;font-size:10.5px;line-height:12.6px;color:#111;font-weight:bold;transform:scaleX(1.040);transform-origin:0 0;-webkit-text-stroke:0.15px #111;">380</div><div class="t" style="left:335.85px;top:433.02px;font-size:10.5px;line-height:12.6px;color:#111;font-weight:bold;transform:scaleX(1.040);transform-origin:0 0;-webkit-text-stroke:0.15px #111;">1330</div><div class="t" style="left:387.34px;top:433.02px;font-size:10.5px;line-height:12.6px;color:#111;font-weight:bold;transform:scaleX(1.040);transform-origin:0 0;-webkit-text-stroke:0.15px #111;">107.5</div><div class="t" style="left:440.84px;top:433.02px;font-size:10.5px;line-height:12.6px;color:#111;font-weight:bold;transform:scaleX(1.040);transform-origin:0 0;-webkit-text-stroke:0.15px #111;">27.14</div><div class="t" style="left:494.34px;top:433.02px;font-size:10.5px;line-height:12.6px;color:#111;font-weight:bold;transform:scaleX(1.040);transform-origin:0 0;-webkit-text-stroke:0.15px #111;">95.00</div><div class="t" style="left:546.93px;top:433.02px;font-size:10.5px;line-height:12.6px;color:#111;font-weight:bold;transform:scaleX(1.040);transform-origin:0 0;-webkit-text-stroke:0.15px #111;">29</div><div class="t" style="left:583.43px;top:433.02px;font-size:10.5px;line-height:12.6px;color:#111;font-weight:bold;transform:scaleX(1.040);transform-origin:0 0;-webkit-text-stroke:0.15px #111;">31</div><div class="t" style="left:617.87px;top:433.02px;font-size:10.5px;line-height:12.6px;color:#111;font-weight:bold;transform:scaleX(1.040);transform-origin:0 0;-webkit-text-stroke:0.15px #111;">23.5</div><div class="t" style="left:25.00px;top:449.02px;font-size:10.5px;line-height:12.6px;color:#111;font-weight:bold;transform:scaleX(0.956);transform-origin:0 0;-webkit-text-stroke:0.15px #111;">433 BAL (HGF 86)</div><div class="t" style="left:180.39px;top:449.02px;font-size:10.5px;line-height:12.6px;color:#111;font-weight:bold;transform:scaleX(1.040);transform-origin:0 0;-webkit-text-stroke:0.15px #111;">433</div><div class="t" style="left:228.85px;top:449.02px;font-size:10.5px;line-height:12.6px;color:#111;font-weight:bold;transform:scaleX(1.040);transform-origin:0 0;-webkit-text-stroke:0.15px #111;">1460</div><div class="t" style="left:285.39px;top:449.02px;font-size:10.5px;line-height:12.6px;color:#111;font-weight:bold;transform:scaleX(1.040);transform-origin:0 0;-webkit-text-stroke:0.15px #111;">349</div><div class="t" style="left:335.85px;top:449.02px;font-size:10.5px;line-height:12.6px;color:#111;font-weight:bold;transform:scaleX(1.040);transform-origin:0 0;-webkit-text-stroke:0.15px #111;">1320</div><div class="t" style="left:384.30px;top:449.02px;font-size:10.5px;line-height:12.6px;color:#111;font-weight:bold;transform:scaleX(1.040);transform-origin:0 0;-webkit-text-stroke:0.15px #111;">104.28</div><div class="t" style="left:440.84px;top:449.02px;font-size:10.5px;line-height:12.6px;color:#111;font-weight:bold;transform:scaleX(1.040);transform-origin:0 0;-webkit-text-stroke:0.15px #111;">24.92</div><div class="t" style="left:494.34px;top:449.02px;font-size:10.5px;line-height:12.6px;color:#111;font-weight:bold;transform:scaleX(1.040);transform-origin:0 0;-webkit-text-stroke:0.15px #111;">94.28</div><div class="t" style="left:542.37px;top:449.02px;font-size:10.5px;line-height:12.6px;color:#111;font-weight:bold;transform:scaleX(1.040);transform-origin:0 0;-webkit-text-stroke:0.15px #111;">30.5</div><div class="t" style="left:583.43px;top:449.02px;font-size:10.5px;line-height:12.6px;color:#111;font-weight:bold;transform:scaleX(1.040);transform-origin:0 0;-webkit-text-stroke:0.15px #111;">25</div><div class="t" style="left:622.43px;top:449.02px;font-size:10.5px;line-height:12.6px;color:#111;font-weight:bold;transform:scaleX(1.040);transform-origin:0 0;-webkit-text-stroke:0.15px #111;">17</div><div class="t" style="left:25.00px;top:465.02px;font-size:10.5px;line-height:12.6px;color:#111;font-weight:bold;-webkit-text-stroke:0.15px #111;">Swanton Bomb</div><div class="t" style="left:180.39px;top:465.02px;font-size:10.5px;line-height:12.6px;color:#111;font-weight:bold;transform:scaleX(1.040);transform-origin:0 0;-webkit-text-stroke:0.15px #111;">433</div><div class="t" style="left:228.85px;top:465.02px;font-size:10.5px;line-height:12.6px;color:#111;font-weight:bold;transform:scaleX(1.040);transform-origin:0 0;-webkit-text-stroke:0.15px #111;">1396</div><div class="t" style="left:285.39px;top:465.02px;font-size:10.5px;line-height:12.6px;color:#111;font-weight:bold;transform:scaleX(1.040);transform-origin:0 0;-webkit-text-stroke:0.15px #111;">351</div><div class="t" style="left:335.85px;top:465.02px;font-size:10.5px;line-height:12.6px;color:#111;font-weight:bold;transform:scaleX(1.040);transform-origin:0 0;-webkit-text-stroke:0.15px #111;">1317</div><div class="t" style="left:440.84px;top:465.02px;font-size:10.5px;line-height:12.6px;color:#111;font-weight:bold;transform:scaleX(1.040);transform-origin:0 0;-webkit-text-stroke:0.15px #111;">25.07</div><div class="t" style="left:25.00px;top:481.02px;font-size:10.5px;line-height:12.6px;color:#111;font-weight:bold;-webkit-text-stroke:0.15px #111;">NEW 343 (3421)</div><div class="t" style="left:180.39px;top:481.02px;font-size:10.5px;line-height:12.6px;color:#111;font-weight:bold;transform:scaleX(1.040);transform-origin:0 0;-webkit-text-stroke:0.15px #111;">343</div><div class="t" style="left:228.85px;top:481.02px;font-size:10.5px;line-height:12.6px;color:#111;font-weight:bold;transform:scaleX(1.040);transform-origin:0 0;-webkit-text-stroke:0.15px #111;">1430</div><div class="t" style="left:285.39px;top:481.02px;font-size:10.5px;line-height:12.6px;color:#111;font-weight:bold;transform:scaleX(1.040);transform-origin:0 0;-webkit-text-stroke:0.15px #111;">342</div><div class="t" style="left:336.15px;top:481.02px;font-size:10.5px;line-height:12.6px;color:#111;font-weight:bold;transform:scaleX(1.040);transform-origin:0 0;-webkit-text-stroke:0.15px #111;">1311</div><div class="t" style="left:384.30px;top:481.02px;font-size:10.5px;line-height:12.6px;color:#111;font-weight:bold;transform:scaleX(1.040);transform-origin:0 0;-webkit-text-stroke:0.15px #111;">102.14</div><div class="t" style="left:440.84px;top:481.02px;font-size:10.5px;line-height:12.6px;color:#111;font-weight:bold;transform:scaleX(1.040);transform-origin:0 0;-webkit-text-stroke:0.15px #111;">24.42</div><div class="t" style="left:494.34px;top:481.02px;font-size:10.5px;line-height:12.6px;color:#111;font-weight:bold;transform:scaleX(1.040);transform-origin:0 0;-webkit-text-stroke:0.15px #111;">93.64</div><div class="t" style="left:546.93px;top:481.02px;font-size:10.5px;line-height:12.6px;color:#111;font-weight:bold;transform:scaleX(1.040);transform-origin:0 0;-webkit-text-stroke:0.15px #111;">18</div><div class="t" style="left:583.43px;top:481.02px;font-size:10.5px;line-height:12.6px;color:#111;font-weight:bold;transform:scaleX(1.040);transform-origin:0 0;-webkit-text-stroke:0.15px #111;">24</div><div class="t" style="left:617.87px;top:481.02px;font-size:10.5px;line-height:12.6px;color:#111;font-weight:bold;transform:scaleX(1.040);transform-origin:0 0;-webkit-text-stroke:0.15px #111;">26.5</div><div class="t" style="left:25.00px;top:497.02px;font-size:10.5px;line-height:12.6px;color:#111;font-weight:bold;-webkit-text-stroke:0.15px #111;">3421 WIDE 2.1</div><div class="t" style="left:180.39px;top:497.02px;font-size:10.5px;line-height:12.6px;color:#111;font-weight:bold;transform:scaleX(1.040);transform-origin:0 0;-webkit-text-stroke:0.15px #111;">343</div><div class="t" style="left:228.85px;top:497.02px;font-size:10.5px;line-height:12.6px;color:#111;font-weight:bold;transform:scaleX(1.040);transform-origin:0 0;-webkit-text-stroke:0.15px #111;">1400</div><div class="t" style="left:285.39px;top:497.02px;font-size:10.5px;line-height:12.6px;color:#111;font-weight:bold;transform:scaleX(1.040);transform-origin:0 0;-webkit-text-stroke:0.15px #111;">309</div><div class="t" style="left:335.85px;top:497.02px;font-size:10.5px;line-height:12.6px;color:#111;font-weight:bold;transform:scaleX(1.040);transform-origin:0 0;-webkit-text-stroke:0.15px #111;">1309</div><div class="t" style="left:391.89px;top:497.02px;font-size:10.5px;line-height:12.6px;color:#111;font-weight:bold;transform:scaleX(1.040);transform-origin:0 0;-webkit-text-stroke:0.15px #111;">100</div><div class="t" style="left:440.84px;top:497.02px;font-size:10.5px;line-height:12.6px;color:#111;font-weight:bold;transform:scaleX(1.040);transform-origin:0 0;-webkit-text-stroke:0.15px #111;">22.07</div><div class="t" style="left:497.37px;top:497.02px;font-size:10.5px;line-height:12.6px;color:#111;font-weight:bold;transform:scaleX(1.040);transform-origin:0 0;-webkit-text-stroke:0.15px #111;">93.5</div><div class="t" style="left:546.93px;top:497.02px;font-size:10.5px;line-height:12.6px;color:#111;font-weight:bold;transform:scaleX(1.040);transform-origin:0 0;-webkit-text-stroke:0.15px #111;">20</div><div class="t" style="left:578.87px;top:497.02px;font-size:10.5px;line-height:12.6px;color:#111;font-weight:bold;transform:scaleX(1.040);transform-origin:0 0;-webkit-text-stroke:0.15px #111;">24.5</div><div class="t" style="left:622.43px;top:497.02px;font-size:10.5px;line-height:12.6px;color:#111;font-weight:bold;transform:scaleX(1.040);transform-origin:0 0;-webkit-text-stroke:0.15px #111;">12</div><div class="b" style="left:649px;top:509px;width:604px;height:2px;background:#111"></div><div class="b" style="left:649px;top:526px;width:604px;height:2px;background:#111"></div><div class="b" style="left:649px;top:543px;width:604px;height:1px;background:#333"></div><div class="b" style="left:649px;top:559px;width:604px;height:1px;background:#333"></div><div class="b" style="left:649px;top:575px;width:604px;height:1px;background:#333"></div><div class="b" style="left:649px;top:591px;width:604px;height:1px;background:#333"></div><div class="b" style="left:649px;top:607px;width:604px;height:1px;background:#333"></div><div class="b" style="left:649px;top:623px;width:604px;height:1px;background:#333"></div><div class="b" style="left:648px;top:510px;width:2px;height:125px;background:#222"></div><div class="b" style="left:813px;top:510px;width:1px;height:125px;background:#222"></div><div class="b" style="left:935px;top:510px;width:1px;height:125px;background:#222"></div><div class="b" style="left:1058px;top:510px;width:1px;height:125px;background:#222"></div><div class="b" style="left:1199px;top:510px;width:1px;height:125px;background:#222"></div><div class="b" style="left:1251px;top:510px;width:2px;height:125px;background:#222"></div><div class="t" style="left:651.50px;top:513.70px;font-size:10.2px;line-height:12.24px;color:#111;font-weight:bold;">SYSTEM</div><div class="t" style="left:815.50px;top:513.70px;font-size:10.2px;line-height:12.24px;color:#111;font-weight:bold;">STARTING</div><div class="t" style="left:937.50px;top:513.70px;font-size:10.2px;line-height:12.24px;color:#111;font-weight:bold;">ALTERNATIVE</div><div class="t" style="left:1060.50px;top:513.70px;font-size:10.2px;line-height:12.24px;color:#111;font-weight:bold;">META</div><div class="t" style="left:1201.50px;top:513.70px;font-size:10.2px;line-height:12.24px;color:#111;font-weight:bold;">SUS</div><div class="t" style="left:651.50px;top:530.20px;font-size:10.2px;line-height:12.24px;color:#222;">1 UP TOP</div><div class="t" style="left:815.50px;top:530.20px;font-size:10.2px;line-height:12.24px;color:#222;">4231 Wingers Rule</div><div class="t" style="left:937.50px;top:530.20px;font-size:10.2px;line-height:12.24px;color:#222;">4231 Andrew</div><div class="t" style="left:1060.50px;top:530.20px;font-size:10.2px;line-height:12.24px;color:#222;">KNAP 4231 HIGHWAY</div><div class="t" style="left:1201.50px;top:530.20px;font-size:10.2px;line-height:12.24px;color:#222;">4231</div><div class="t" style="left:651.50px;top:546.20px;font-size:10.2px;line-height:12.24px;color:#222;">2 UP TOP WM - GOOD CM</div><div class="t" style="left:815.50px;top:546.20px;font-size:10.2px;line-height:12.24px;color:#222;">1AW 442</div><div class="t" style="left:937.50px;top:546.20px;font-size:10.2px;line-height:12.24px;color:#222;">442 SORRI</div><div class="t" style="left:1060.50px;top:546.20px;font-size:10.2px;line-height:12.24px;color:#222;">424 met pdf 3 bal</div><div class="t" style="left:1201.50px;top:546.20px;font-size:10.2px;line-height:12.24px;color:#222;">4411</div><div class="t" style="left:651.50px;top:562.20px;font-size:10.2px;line-height:12.24px;color:#222;">2 UP TOP WM  - GOOD WNGRS</div><div class="t" style="left:815.50px;top:562.20px;font-size:10.2px;line-height:12.24px;color:#222;">1AW 442</div><div class="t" style="left:937.50px;top:562.20px;font-size:10.2px;line-height:12.24px;color:#222;">424 Wng</div><div class="t" style="left:1060.50px;top:562.20px;font-size:10.2px;line-height:12.24px;color:#222;">424 met pdf 3 bal</div><div class="t" style="left:1201.50px;top:562.20px;font-size:10.2px;line-height:12.24px;color:#222;">4411</div><div class="t" style="left:651.50px;top:578.20px;font-size:10.2px;line-height:12.24px;color:#222;">2 UP TOP AMRL</div><div class="t" style="left:815.50px;top:578.20px;font-size:10.2px;line-height:12.24px;color:#222;">424 MEDI PDF UL</div><div class="t" style="left:937.50px;top:578.20px;font-size:10.2px;line-height:12.24px;color:#222;">424 Wng</div><div class="t" style="left:1060.50px;top:578.20px;font-size:10.2px;line-height:12.24px;color:#222;">424 MEDI PDF UL</div><div class="t" style="left:1201.50px;top:578.20px;font-size:10.2px;line-height:12.24px;color:#222;">4231</div><div class="t" style="left:651.50px;top:594.20px;font-size:10.2px;line-height:12.24px;color:#222;">UNDERDOG</div><div class="t" style="left:815.50px;top:594.20px;font-size:10.2px;line-height:12.24px;color:#222;">Swanton Bomb</div><div class="t" style="left:937.50px;top:594.20px;font-size:10.2px;line-height:12.24px;color:#222;">AWKnap 451 BAL P109</div><div class="t" style="left:1060.50px;top:594.20px;font-size:10.2px;line-height:12.24px;color:#222;">4231 Wingers Rule</div><div class="t" style="left:1201.50px;top:594.20px;font-size:10.2px;line-height:12.24px;color:#222;">new</div><div class="t" style="left:651.50px;top:610.20px;font-size:10.2px;line-height:12.24px;color:#222;">A 433</div><div class="t" style="left:815.50px;top:610.20px;font-size:10.2px;line-height:12.24px;color:#222;">AWKnap 451 BAL P109</div><div class="t" style="left:1060.50px;top:610.20px;font-size:10.2px;line-height:12.24px;color:#222;">4231 Wingers Rule</div><div class="t" style="left:1201.50px;top:610.20px;font-size:10.2px;line-height:12.24px;color:#222;">433</div><div class="t" style="left:651.50px;top:626.20px;font-size:10.2px;line-height:12.24px;color:#222;">BACK 3</div><div class="t" style="left:815.50px;top:626.20px;font-size:10.2px;line-height:12.24px;color:#222;">3421 beryl 2.1</div><div class="t" style="left:937.50px;top:626.20px;font-size:10.2px;line-height:12.24px;color:#222;">3421 beryl 2.1 R/LCAM</div><div class="t" style="left:1060.50px;top:626.20px;font-size:10.2px;line-height:12.24px;color:#222;">META 37</div><div class="t" style="left:1201.50px;top:626.20px;font-size:10.2px;line-height:12.24px;color:#222;">541</div><div class="b" style="left:164px;top:511px;width:51px;height:17px;background:#fff"></div><div class="b" style="left:321px;top:543px;width:161px;height:17px;background:#fff"></div><div class="b" style="left:374px;top:462px;width:54px;height:17px;border:1.5px solid #3a7d52;background:transparent"></div><div class="b" style="left:425px;top:476px;width:5px;height:5px;background:#217346;border:1px solid #fff"></div>
<svg class="b" style="left:12px;top:12px" width="16" height="16" viewBox="0 0 16 16" fill="none"><rect x="4" y="1" width="10.5" height="13.5" rx="1.2" fill="#1f9d55"/><rect x="4" y="1" width="10.5" height="4.5" fill="#33c481"/><rect x="4" y="10" width="10.5" height="4.5" fill="#107c41"/><rect x="1.2" y="3.8" width="8" height="8" rx="1" fill="#0f703b"/><path d="M3.3 5.6 L7.1 10 M7.1 5.6 L3.3 10" stroke="#fff" stroke-width="1.3"/></svg><div class="t" style="left:41.00px;top:14.70px;font-size:9px;line-height:10.8px;color:#333;transform:scaleX(0.910);transform-origin:0 0;">AutoSave</div><div class="b" style="left:82px;top:11px;width:36px;height:18px;border:1px solid #555;border-radius:9px;background:#fff"></div><svg class="b" style="left:84px;top:13px" width="14" height="14" viewBox="0 0 14 14" fill="none"><circle cx="7" cy="7" r="5.2" fill="#444"/></svg><svg class="b" style="left:126px;top:12px" width="16" height="16" viewBox="0 0 16 16" fill="none"><path d="M1.5 2.5 a1 1 0 0 1 1-1 H12 L14.5 4 V13.5 a1 1 0 0 1 -1 1 H2.5 a1 1 0 0 1 -1-1 Z" fill="#b652c6"/><rect x="4" y="2" width="7" height="4" fill="#e9c6ef"/><rect x="4" y="9" width="8" height="5" fill="#f3e1f6"/></svg><svg class="b" style="left:140px;top:0px" width="80" height="40" viewBox="140 0 80 40" fill="none"><path d="M152 13.5 V18.5 H157.5" stroke="#a9a4a2" stroke-width="1.2"/><path d="M152.5 18 Q156.5 12.5 161 14 Q165 16.5 161.5 21 L156 26" stroke="#a9a4a2" stroke-width="1.2"/><path d="M170 18.5 L171.7 20.2 L173.4 18.5" stroke="#c3bdbb" stroke-width="1"/><path d="M195 13.5 V18.5 H189.5" stroke="#a9a4a2" stroke-width="1.2"/><path d="M194.5 18 Q190.5 12.5 186 14 Q182 16.5 185.5 21 L191 26" stroke="#a9a4a2" stroke-width="1.2"/><path d="M202.3 18.5 L204 20.2 L205.7 18.5" stroke="#c3bdbb" stroke-width="1"/></svg><svg class="b" style="left:217px;top:15px" width="9" height="10" viewBox="0 0 9 10" fill="none"><path d="M1.5 2.5 H7.5" stroke="#444" stroke-width="1"/><path d="M2 5 L4.5 7.5 L7 5" stroke="#444" stroke-width="1.1"/></svg><div class="t" style="left:244.00px;top:14.11px;font-size:10px;line-height:12.0px;color:#333;transform:scaleX(0.981);transform-origin:0 0;">FM24 • Saved to this PC</div><svg class="b" style="left:354px;top:16px" width="10" height="8" viewBox="0 0 10 8" fill="none"><path d="M1 2 L5 6 L9 2" stroke="#444" stroke-width="1.2"/></svg><div class="b" style="left:493px;top:7px;width:307px;height:25px;background:#fbfaf9;border:1px solid #e6e2df;border-radius:4px;box-shadow:0 1px 0 #d9d4d0"></div><svg class="b" style="left:503px;top:12px" width="16" height="16" viewBox="0 0 16 16" fill="none"><circle cx="9.5" cy="6.5" r="4.2" stroke="#444" stroke-width="1.2"/><path d="M6.5 9.5 L2.5 13.5" stroke="#444" stroke-width="1.3"/></svg><div class="t" style="left:527.00px;top:13.82px;font-size:10.5px;line-height:12.6px;color:#666;transform:scaleX(1.022);transform-origin:0 0;">Search</div><svg class="b" style="left:1070px;top:13px" width="14" height="13" viewBox="0 0 14 13" fill="none"><path d="M7 1 L13.3 12.3 H0.7 Z" fill="#f3b447" stroke="#d48a17" stroke-width="0.8"/><path d="M7 4.5 V8.5" stroke="#3b2a10" stroke-width="1.4"/><circle cx="7" cy="10.3" r="0.8" fill="#3b2a10"/></svg><svg class="b" style="left:1091px;top:10px" width="21" height="21" viewBox="0 0 21 21" fill="none"><circle cx="10.5" cy="10.5" r="10" fill="#4e7f71"/></svg><div class="t" style="left:1095.94px;top:15.79px;font-size:8px;line-height:9.6px;color:#e8f0ed;">NA</div><svg class="b" style="left:1134px;top:12px" width="12" height="16" viewBox="0 0 12 16" fill="none"><path d="M6 1.2 A4.3 4.3 0 0 0 3.4 9 V11 H8.6 V9 A4.3 4.3 0 0 0 6 1.2 Z" stroke="#444" stroke-width="1.1"/><path d="M4 13 H8" stroke="#444" stroke-width="1.2"/></svg><div class="b" style="left:1175px;top:19px;width:10px;height:1px;background:#333"></div><svg class="b" style="left:1214px;top:13px" width="13" height="13" viewBox="0 0 13 13" fill="none"><rect x="1.5" y="3.5" width="7.5" height="7.5" rx="1.3" stroke="#333" stroke-width="1"/><path d="M3.8 1.5 H9.5 a1.5 1.5 0 0 1 1.5 1.5 V8.5" stroke="#333" stroke-width="1"/></svg><svg class="b" style="left:1254px;top:14px" width="12" height="12" viewBox="0 0 12 12" fill="none"><path d="M1 1 L11 11 M11 1 L1 11" stroke="#333" stroke-width="1.1"/></svg><div class="t" style="left:18.00px;top:46.97px;font-size:11.1px;line-height:13.32px;color:#333;transform:scaleX(0.895);transform-origin:0 0;">File</div><div class="t" style="left:56.00px;top:46.97px;font-size:11.1px;line-height:13.32px;color:#1f1f1f;transform:scaleX(1.047);transform-origin:0 0;-webkit-text-stroke:0.35px #1f1f1f;">Home</div><div class="t" style="left:103.00px;top:46.97px;font-size:11.1px;line-height:13.32px;color:#333;">Insert</div><div class="t" style="left:147.00px;top:46.97px;font-size:11.1px;line-height:13.32px;color:#333;">Page Layout</div><div class="t" style="left:225.50px;top:46.97px;font-size:11.1px;line-height:13.32px;color:#333;">Formulas</div><div class="t" style="left:287.50px;top:46.97px;font-size:11.1px;line-height:13.32px;color:#333;">Data</div><div class="t" style="left:327.50px;top:46.97px;font-size:11.1px;line-height:13.32px;color:#333;transform:scaleX(0.948);transform-origin:0 0;">Review</div><div class="t" style="left:378.50px;top:46.97px;font-size:11.1px;line-height:13.32px;color:#333;transform:scaleX(1.027);transform-origin:0 0;">View</div><div class="t" style="left:418.75px;top:46.97px;font-size:11.1px;line-height:13.32px;color:#333;transform:scaleX(1.052);transform-origin:0 0;">Automate</div><div class="t" style="left:485.00px;top:46.97px;font-size:11.1px;line-height:13.32px;color:#333;">Help</div><div class="b" style="left:56px;top:61px;width:32px;height:3px;background:#217346;border-radius:1.5px"></div><div class="b" style="left:1126px;top:43px;width:77px;height:20px;background:#fff;border:1px solid #d2cdc9;border-radius:4px"></div><svg class="b" style="left:1129px;top:47px" width="13" height="12" viewBox="0 0 13 12" fill="none"><path d="M1.5 1.5 H10.5 V7.5 H5 L2.5 10 V7.5 H1.5 Z" stroke="#444" stroke-width="1"/></svg><div class="t" style="left:1143.70px;top:46.64px;font-size:10.8px;line-height:12.96px;color:#333;transform:scaleX(1.048);transform-origin:0 0;">Comments</div><div class="b" style="left:1211px;top:43px;width:59px;height:20px;background:#1b7a43;border-radius:4px"></div><svg class="b" style="left:1215px;top:46px" width="14" height="14" viewBox="0 0 14 14" fill="none"><path d="M2 6 V12 H11 V9" stroke="#fff" stroke-width="1"/><path d="M5 9 C5 6 7 4.5 10 4.5 M8 2.5 L10.5 4.5 L8 6.5" stroke="#fff" stroke-width="1"/></svg><div class="t" style="left:1228.50px;top:46.64px;font-size:10.8px;line-height:12.96px;color:#eef6f0;transform:scaleX(0.954);transform-origin:0 0;">Share</div><svg class="b" style="left:1261px;top:50px" width="8" height="6" viewBox="0 0 8 6" fill="none"><path d="M2 2 L3.5 3.5 L5 2" stroke="#fff" stroke-width="1.1"/></svg><div class="b" style="left:7px;top:66px;width:1266px;height:107px;background:#fff;border-radius:7px;box-shadow:0 1px 2px rgba(0,0,0,0.18);overflow:hidden"></div><div class="b" style="left:7px;top:147px;width:1266px;height:26px;background:#fcf5d2;border-top:1px solid #e8e3d3;border-radius:0 0 7px 7px"></div><div class="b" style="left:99px;top:70px;width:1px;height:76px;background:#e1e1e1"></div><div class="b" style="left:293px;top:70px;width:1px;height:76px;background:#e1e1e1"></div><div class="b" style="left:542px;top:70px;width:1px;height:76px;background:#e1e1e1"></div><div class="b" style="left:676px;top:70px;width:1px;height:76px;background:#e1e1e1"></div><div class="b" style="left:838px;top:70px;width:1px;height:76px;background:#e1e1e1"></div><div class="b" style="left:958px;top:70px;width:1px;height:76px;background:#e1e1e1"></div><div class="b" style="left:1088px;top:70px;width:1px;height:76px;background:#e1e1e1"></div><div class="b" style="left:1139px;top:70px;width:1px;height:76px;background:#e1e1e1"></div><div class="b" style="left:1227px;top:70px;width:1px;height:76px;background:#e1e1e1"></div><div class="t" style="left:26.45px;top:134.35px;font-size:9.6px;line-height:11.52px;color:#4a4a4a;">Clipboard</div><div class="t" style="left:180.40px;top:134.35px;font-size:9.6px;line-height:11.52px;color:#4a4a4a;">Font</div><div class="t" style="left:389.65px;top:134.35px;font-size:9.6px;line-height:11.52px;color:#4a4a4a;">Alignment</div><div class="t" style="left:584.93px;top:134.35px;font-size:9.6px;line-height:11.52px;color:#4a4a4a;">Number</div><div class="t" style="left:742.93px;top:134.35px;font-size:9.6px;line-height:11.52px;color:#4a4a4a;">Styles</div><div class="t" style="left:886.33px;top:134.35px;font-size:9.6px;line-height:11.52px;color:#4a4a4a;">Cells</div><div class="t" style="left:1007.32px;top:134.35px;font-size:9.6px;line-height:11.52px;color:#4a4a4a;">Editing</div><div class="t" style="left:1096.72px;top:134.35px;font-size:9.6px;line-height:11.52px;color:#4a4a4a;">Add-ins</div><svg class="b" style="left:88px;top:136px" width="9" height="9" viewBox="0 0 9 9" fill="none"><path d="M0.5 6 V0.5 H6" stroke="#777" stroke-width="0.9"/><path d="M2.5 2.5 L7.5 7.5 M7.5 4 V7.5 H4" stroke="#555" stroke-width="0.9"/></svg><svg class="b" style="left:282px;top:136px" width="9" height="9" viewBox="0 0 9 9" fill="none"><path d="M0.5 6 V0.5 H6" stroke="#777" stroke-width="0.9"/><path d="M2.5 2.5 L7.5 7.5 M7.5 4 V7.5 H4" stroke="#555" stroke-width="0.9"/></svg><svg class="b" style="left:532px;top:136px" width="9" height="9" viewBox="0 0 9 9" fill="none"><path d="M0.5 6 V0.5 H6" stroke="#777" stroke-width="0.9"/><path d="M2.5 2.5 L7.5 7.5 M7.5 4 V7.5 H4" stroke="#555" stroke-width="0.9"/></svg><svg class="b" style="left:665px;top:136px" width="9" height="9" viewBox="0 0 9 9" fill="none"><path d="M0.5 6 V0.5 H6" stroke="#777" stroke-width="0.9"/><path d="M2.5 2.5 L7.5 7.5 M7.5 4 V7.5 H4" stroke="#555" stroke-width="0.9"/></svg><svg class="b" style="left:22px;top:70px" width="28" height="30" viewBox="0 0 28 30" fill="none"><path d="M3.5 5.5 H19 V25 H3.5 Z" stroke="#e8a33c" stroke-width="1.3" fill="#fffaf2"/><path d="M7 8 V5 H9.5 Q10.5 2 11.5 2 Q12.5 2 13.5 5 H16 V8 Z" stroke="#666" stroke-width="1" fill="#fff"/><rect x="14.5" y="12.5" width="10.5" height="14.5" stroke="#666" stroke-width="1.2" fill="#fff"/></svg><div class="t" style="left:22.00px;top:102.07px;font-size:9.4px;line-height:11.28px;color:#474747;">Paste</div><svg class="b" style="left:30px;top:116px" width="8" height="6" viewBox="0 0 8 6" fill="none"><path d="M2 2 L4 4 L6 2" stroke="#444" stroke-width="1.1"/></svg><svg class="b" style="left:56px;top:71px" width="14" height="15" viewBox="0 0 14 15" fill="none"><path d="M4 1 L9.2 10 M10 1 L4.8 10" stroke="#444" stroke-width="0.9"/><circle cx="4.3" cy="12" r="1.9" stroke="#3c7ec9" stroke-width="1.1" fill="#cfe2f7"/><circle cx="9.7" cy="12" r="1.9" stroke="#3c7ec9" stroke-width="1.1" fill="#cfe2f7"/></svg><svg class="b" style="left:55px;top:92px" width="16" height="16" viewBox="0 0 16 16" fill="none"><path d="M1.5 1.5 H5.5 V12.5 H1.5 Z" stroke="#444" stroke-width="1"/><path d="M5 4.5 H10 L13.5 8 V14.5 H5 Z" stroke="#444" stroke-width="1" fill="#fff"/><path d="M7 10 H11 M7 12 H11" stroke="#666" stroke-width="0.8"/></svg><svg class="b" style="left:78px;top:96px" width="8" height="6" viewBox="0 0 8 6" fill="none"><path d="M2 2 L4 4 L6 2" stroke="#444" stroke-width="1.1"/></svg><svg class="b" style="left:55px;top:112px" width="16" height="16" viewBox="0 0 16 16" fill="none"><path d="M1.5 10 L6 5.5 L10.5 10 L7 14.5 Q5 14 4 12.5 Q3 13 1.5 13.5 Q2.5 12 1.5 10 Z" fill="#f7b066" stroke="#e08a2e" stroke-width="0.8"/><path d="M6.5 6 L9.5 3 L13 6.5 L10 9.5" stroke="#555" stroke-width="1" fill="#fff"/><path d="M12 4.5 L14.5 2" stroke="#3c7ec9" stroke-width="1.6"/></svg><div class="b" style="left:106px;top:74px;width:96px;height:21px;border:1px solid #c4c4c4;border-radius:4px;background:#fff"></div><div class="t" style="left:108.00px;top:79.41px;font-size:10px;line-height:12.0px;color:#3a3a3a;transform:scaleX(0.988);transform-origin:0 0;">Calibri</div><svg class="b" style="left:193px;top:82px" width="8" height="6" viewBox="0 0 8 6" fill="none"><path d="M2 2 L4 4 L6 2" stroke="#333" stroke-width="1.1"/></svg><div class="b" style="left:203px;top:74px;width:42px;height:21px;border:1px solid #c4c4c4;border-radius:4px;background:#fff"></div><div class="t" style="left:206.50px;top:79.41px;font-size:10px;line-height:12.0px;color:#3a3a3a;">11</div><svg class="b" style="left:236px;top:82px" width="8" height="6" viewBox="0 0 8 6" fill="none"><path d="M2 2 L4 4 L6 2" stroke="#333" stroke-width="1.1"/></svg><div class="t" style="left:250.00px;top:77.35px;font-size:13px;line-height:15.6px;color:#333;">A</div><svg class="b" style="left:259px;top:77px" width="6" height="5" viewBox="0 0 6 5" fill="none"><path d="M1 4 L3 1.5 L5 4" stroke="#444" stroke-width="0.9"/></svg><div class="t" style="left:272.00px;top:79.53px;font-size:11px;line-height:13.2px;color:#333;">A</div><svg class="b" style="left:280px;top:79px" width="6" height="5" viewBox="0 0 6 5" fill="none"><path d="M1 1.5 L3 4 L5 1.5" stroke="#2a78c6" stroke-width="0.9"/></svg><div class="b" style="left:106px;top:101px;width:20px;height:21px;border:1px solid #bdbdbd;border-radius:4px;background:#ececec"></div><div class="t" style="left:112.21px;top:105.32px;font-size:10.5px;line-height:12.6px;color:#333;font-weight:bold;">B</div><div class="t" style="left:137.00px;top:105.03px;font-size:11px;line-height:13.2px;color:#444;font-style:italic;">I</div><div class="t" style="left:154.21px;top:105.32px;font-size:10.5px;line-height:12.6px;color:#444;text-decoration:underline;">U</div><svg class="b" style="left:170px;top:109px" width="8" height="6" viewBox="0 0 8 6" fill="none"><path d="M2 2 L4 4 L6 2" stroke="#444" stroke-width="1.1"/></svg><svg class="b" style="left:206px;top:109px" width="8" height="6" viewBox="0 0 8 6" fill="none"><path d="M2 2 L4 4 L6 2" stroke="#444" stroke-width="1.1"/></svg><svg class="b" style="left:242px;top:109px" width="8" height="6" viewBox="0 0 8 6" fill="none"><path d="M2 2 L4 4 L6 2" stroke="#444" stroke-width="1.1"/></svg><svg class="b" style="left:276px;top:109px" width="8" height="6" viewBox="0 0 8 6" fill="none"><path d="M2 2 L4 4 L6 2" stroke="#444" stroke-width="1.1"/></svg><div class="b" style="left:183px;top:104px;width:1px;height:16px;background:#dadada"></div><div class="b" style="left:219px;top:104px;width:1px;height:16px;background:#dadada"></div><svg class="b" style="left:180px;top:96px" width="110" height="30" viewBox="180 96 110 30" fill="none"><path d="M226.5 108.5 L230.5 104.5 L235 109 L231 113 Z" stroke="#444" stroke-width="1" fill="#fff"/><path d="M231 103 V108" stroke="#444" stroke-width="1"/><path d="M233 106 Q236.5 105.5 236.5 110" stroke="#2a78c6" stroke-width="1"/><path d="M235 108.5 L236.5 111 L238 108.5" stroke="#2a78c6" stroke-width="0.9"/><rect x="224" y="115" width="13.5" height="3" fill="#f2f000"/><path d="M261 114 L265 104.5 L269 114 M262.5 110.5 H267.5" stroke="#444" stroke-width="1.1"/><rect x="258" y="114" width="13.5" height="3" fill="#e01010"/><g stroke="#555" stroke-width="0.9" stroke-dasharray="1 1"><path d="M188.5 104.5 H200.5 V116.5 M188.5 104.5 V116.5 M194.5 104.5 V116.5 M188.5 110.5 H200.5"/></g><path d="M188 116.5 H201" stroke="#444" stroke-width="1.2"/></svg><svg class="b" style="left:296px;top:70px" width="120" height="55" viewBox="0 0 120 55" fill="none"><path d="M9 8.5 H21" stroke="#555" stroke-width="1"/><path d="M11 11.5 H19" stroke="#555" stroke-width="1"/><path d="M9 14.5 H21" stroke="#555" stroke-width="1"/><path d="M30 10.5 H42" stroke="#555" stroke-width="1"/><path d="M32 14 H40" stroke="#555" stroke-width="1"/><path d="M30 17.5 H42" stroke="#555" stroke-width="1"/><path d="M51.5 14.5 H63.5" stroke="#555" stroke-width="1"/><path d="M53.5 17.5 H61.5" stroke="#555" stroke-width="1"/><path d="M51.5 20.5 H63.5" stroke="#555" stroke-width="1"/></svg><div class="b" style="left:343px;top:74px;width:21px;height:21px;border:1px solid #bdbdbd;border-radius:4px;background:#ececec"></div><svg class="b" style="left:296px;top:70px" width="120" height="55" viewBox="0 0 120 55" fill="none"><path d="M51.5 14.5 H63.5" stroke="#555" stroke-width="1"/><path d="M53.5 17.5 H61.5" stroke="#555" stroke-width="1"/><path d="M51.5 20.5 H63.5" stroke="#555" stroke-width="1"/></svg><svg class="b" style="left:369px;top:76px" width="16" height="16" viewBox="0 0 16 16" fill="none"><text x="0" y="0" font-size="8" fill="#444" font-family="Liberation Sans" transform="translate(3.5 11) rotate(-45)">ab</text><path d="M5 14 L14 5 M10 5 H14 V9" stroke="#2a78c6" stroke-width="1"/></svg><svg class="b" style="left:387px;top:82px" width="8" height="6" viewBox="0 0 8 6" fill="none"><path d="M2 2 L4 4 L6 2" stroke="#444" stroke-width="1.1"/></svg><svg class="b" style="left:296px;top:98px" width="120" height="26" viewBox="0 0 120 26" fill="none"><path d="M9 7.5 H21" stroke="#555" stroke-width="1"/><path d="M9 11 H18" stroke="#555" stroke-width="1"/><path d="M9 14.5 H21" stroke="#555" stroke-width="1"/><path d="M9 18 H17" stroke="#555" stroke-width="1"/><path d="M51 7.5 H63" stroke="#555" stroke-width="1"/><path d="M54 11 H63" stroke="#555" stroke-width="1"/><path d="M51 14.5 H63" stroke="#555" stroke-width="1"/><path d="M55 18 H63" stroke="#555" stroke-width="1"/></svg><div class="b" style="left:322px;top:101px;width:20px;height:21px;border:1px solid #bdbdbd;border-radius:4px;background:#ececec"></div><svg class="b" style="left:296px;top:98px" width="120" height="26" viewBox="0 0 120 26" fill="none"><path d="M30 7.5 H42" stroke="#555" stroke-width="1"/><path d="M32 11 H40" stroke="#555" stroke-width="1"/><path d="M30 14.5 H42" stroke="#555" stroke-width="1"/><path d="M32 18 H40" stroke="#555" stroke-width="1"/></svg><div class="b" style="left:365px;top:104px;width:1px;height:16px;background:#dadada"></div><svg class="b" style="left:370px;top:104px" width="14" height="14" viewBox="0 0 14 14" fill="none"><path d="M0 1.5 H13 M7 5 H13 M7 8.5 H13 M0 12 H13" stroke="#555" stroke-width="1"/><path d="M5.5 6.8 H0.8 M2.8 4.8 L0.8 6.8 L2.8 8.8" stroke="#2a78c6" stroke-width="1.1"/></svg><svg class="b" style="left:392px;top:104px" width="14" height="14" viewBox="0 0 14 14" fill="none"><path d="M0 1.5 H13 M7 5 H13 M7 8.5 H13 M0 12 H13" stroke="#555" stroke-width="1"/><path d="M0.5 6.8 H5.2 M3.2 4.8 L5.2 6.8 L3.2 8.8" stroke="#2a78c6" stroke-width="1.1"/></svg><div class="b" style="left:413px;top:75px;width:1px;height:48px;background:#dadada"></div><svg class="b" style="left:415px;top:72px" width="30" height="50" viewBox="415 72 30 50" fill="none"><text x="423" y="84" font-size="7" fill="#555" font-family="Liberation Sans">ab</text><text x="423.5" y="90" font-size="7" fill="#555" font-family="Liberation Sans">c</text><path d="M432.5 82.5 Q435 84.5 433 87.5 Q431.5 89 429 88.5 M430.5 86.8 L428.8 88.5 L430.5 90" stroke="#2a78c6" stroke-width="1" fill="none"/><rect x="421.5" y="104.5" width="12" height="12" fill="#d4e6f7" stroke="#666" stroke-width="1"/><path d="M421.5 107 H433.5 M421.5 114 H433.5" stroke="#777" stroke-width="0.8"/><path d="M424 110.5 H431 M425.5 109 L424 110.5 L425.5 112 M429.5 109 L431 110.5 L429.5 112" stroke="#2a78c6" stroke-width="0.9" fill="none"/></svg><div class="t" style="left:438.00px;top:79.57px;font-size:9.4px;line-height:11.28px;color:#474747;transform:scaleX(1.072);transform-origin:0 0;">Wrap Text</div><div class="t" style="left:438.00px;top:106.37px;font-size:9.4px;line-height:11.28px;color:#474747;transform:scaleX(1.055);transform-origin:0 0;">Merge &amp; Centre</div><svg class="b" style="left:521px;top:109px" width="8" height="6" viewBox="0 0 8 6" fill="none"><path d="M2 2 L4 4 L6 2" stroke="#444" stroke-width="1.1"/></svg><div class="b" style="left:549px;top:74px;width:121px;height:21px;border:1px solid #c4c4c4;border-radius:4px;background:#fff"></div><div class="t" style="left:551.00px;top:79.41px;font-size:10px;line-height:12.0px;color:#3a3a3a;transform:scaleX(1.040);transform-origin:0 0;">General</div><svg class="b" style="left:662px;top:82px" width="8" height="6" viewBox="0 0 8 6" fill="none"><path d="M2 2 L4 4 L6 2" stroke="#333" stroke-width="1.1"/></svg><svg class="b" style="left:551px;top:104px" width="17" height="16" viewBox="0 0 17 16" fill="none"><rect x="1" y="2" width="12" height="9" stroke="#666" stroke-width="1" fill="#eee"/><rect x="8" y="7" width="7" height="7" rx="1" fill="#f2b15b" stroke="#d9861f" stroke-width="0.7"/></svg><svg class="b" style="left:571px;top:109px" width="8" height="6" viewBox="0 0 8 6" fill="none"><path d="M2 2 L4 4 L6 2" stroke="#444" stroke-width="1.1"/></svg><div class="t" style="left:586.00px;top:103.26px;font-size:14px;line-height:16.8px;color:#444;transform:scaleX(1.125);transform-origin:0 0;">%</div><svg class="b" style="left:609px;top:104px" width="10" height="14" viewBox="0 0 10 14" fill="none"><circle cx="4.5" cy="4" r="2.6" fill="#333"/><path d="M6.6 4.5 Q7 9.5 2.5 12" stroke="#333" stroke-width="1.8"/></svg><div class="b" style="left:627px;top:104px;width:1px;height:16px;background:#dadada"></div><svg class="b" style="left:631px;top:103px" width="16" height="16" viewBox="0 0 16 16" fill="none"><path d="M1 4.5 H6 M3 2.5 L1 4.5 L3 6.5" stroke="#2a78c6" stroke-width="1"/><text x="7" y="7" font-size="6.5" fill="#444" font-family="Liberation Sans">0</text><text x="3" y="14" font-size="6.5" fill="#444" font-family="Liberation Sans">.00</text></svg><svg class="b" style="left:653px;top:103px" width="16" height="16" viewBox="0 0 16 16" fill="none"><text x="3" y="7" font-size="6.5" fill="#444" font-family="Liberation Sans">.00</text><path d="M1 11.5 H6 M4 9.5 L6 11.5 L4 13.5" stroke="#2a78c6" stroke-width="1"/><text x="8" y="14" font-size="6.5" fill="#444" font-family="Liberation Sans">0</text></svg><svg class="b" style="left:695px;top:66px" width="140" height="34" viewBox="695 66 140 34" fill="none"><rect x="702.5" y="75.5" width="22" height="17" fill="#fff"/><rect x="706" y="75.5" width="10.5" height="6" fill="#f27f86"/><rect x="706" y="87" width="12" height="5.5" fill="#f27f86"/><rect x="706" y="81.5" width="7" height="5.5" fill="#5aa0e0"/><rect x="702.5" y="75.5" width="22" height="17" stroke="#555" stroke-width="1.1" fill="none"/><path d="M706 75.5 V92.5 M716.5 75.5 V92.5 M720.5 75.5 V92.5 M702.5 81.5 H724.5 M702.5 87 H724.5" stroke="#555" stroke-width="0.9"/><rect x="757.5" y="75.5" width="22" height="17" fill="#fff"/><rect x="764" y="81.5" width="15.5" height="11" fill="#5aa0e0"/><rect x="757.5" y="75.5" width="22" height="17" stroke="#555" stroke-width="1.1" fill="none"/><path d="M764 75.5 V92.5 M772 75.5 V92.5 M757.5 81.5 H779.5 M757.5 87 H779.5" stroke="#555" stroke-width="0.9"/><path d="M782 79.5 L770 91.5" stroke="#555" stroke-width="3"/><path d="M782 79.5 L770 91.5" stroke="#fff" stroke-width="1.4"/><path d="M770.5 90 Q766 90.5 764.5 95.5 Q769.5 95.5 772 92.5 Z" fill="#4a95df"/><rect x="800.5" y="75.5" width="24" height="17" fill="#fff"/><rect x="804" y="78" width="18" height="10.5" fill="#5aa0e0"/><rect x="800.5" y="75.5" width="24" height="17" stroke="#555" stroke-width="1.1" fill="none"/><path d="M804 75.5 V92.5 M822 75.5 V92.5 M800.5 78 H824.5 M800.5 88.5 H824.5" stroke="#555" stroke-width="0.9"/><path d="M826 79.5 L814 91.5" stroke="#555" stroke-width="3"/><path d="M826 79.5 L814 91.5" stroke="#fff" stroke-width="1.4"/><path d="M814.5 90 Q810 90.5 808.5 95.5 Q813.5 95.5 816 92.5 Z" fill="#4a95df"/></svg><div class="t" style="left:687.50px;top:101.27px;font-size:9.4px;line-height:11.28px;color:#474747;transform:scaleX(1.084);transform-origin:0 0;">Conditional</div><div class="t" style="left:684.50px;top:114.27px;font-size:9.4px;line-height:11.28px;color:#474747;transform:scaleX(1.091);transform-origin:0 0;">Formatting</div><svg class="b" style="left:734px;top:116px" width="8" height="6" viewBox="0 0 8 6" fill="none"><path d="M2 2 L4 4 L6 2" stroke="#444" stroke-width="1.1"/></svg><div class="t" style="left:746.50px;top:101.27px;font-size:9.4px;line-height:11.28px;color:#474747;transform:scaleX(1.016);transform-origin:0 0;">Format as</div><div class="t" style="left:752.50px;top:114.27px;font-size:9.4px;line-height:11.28px;color:#474747;transform:scaleX(1.023);transform-origin:0 0;">Table</div><svg class="b" style="left:778px;top:116px" width="8" height="6" viewBox="0 0 8 6" fill="none"><path d="M2 2 L4 4 L6 2" stroke="#444" stroke-width="1.1"/></svg><div class="t" style="left:803.50px;top:101.27px;font-size:9.4px;line-height:11.28px;color:#474747;transform:scaleX(1.050);transform-origin:0 0;">Cell</div><div class="t" style="left:794.00px;top:114.27px;font-size:9.4px;line-height:11.28px;color:#474747;transform:scaleX(1.094);transform-origin:0 0;">Styles</div><svg class="b" style="left:822px;top:116px" width="8" height="6" viewBox="0 0 8 6" fill="none"><path d="M2 2 L4 4 L6 2" stroke="#444" stroke-width="1.1"/></svg><svg class="b" style="left:845px;top:66px" width="110" height="34" viewBox="845 66 110 34" fill="none"><rect x="850.5" y="75.5" width="23" height="17" fill="#fff" stroke="#555" stroke-width="1.1"/><path d="M858.3 75.5 V92.5 M865.8 75.5 V92.5 M850.5 81.3 H873.5 M850.5 87 H873.5" stroke="#555" stroke-width="0.9"/><rect x="855" y="81" width="20" height="6" fill="#5aa0e0" stroke="#2a78c6" stroke-width="0.8"/><path d="M867 84 H850 M854 80 L850 84 L854 88" stroke="#2a78c6" stroke-width="1" fill="none"/><rect x="886.5" y="75.5" width="23" height="17" fill="#fff" stroke="#555" stroke-width="1.1"/><path d="M894.3 75.5 V92.5 M901.8 75.5 V92.5 M886.5 81.3 H909.5 M886.5 87 H909.5" stroke="#555" stroke-width="0.9"/><path d="M890 81 H902 L904.5 84 L902 87 H890 Z" fill="#5aa0e0" stroke="#2a78c6" stroke-width="0.8"/><path d="M902.5 80 L910.5 89 M910.5 80 L902.5 89" stroke="#e0433b" stroke-width="1"/><path d="M927 71.5 H941" stroke="#4a8ccf" stroke-width="1.3"/><rect x="922.5" y="75.5" width="23" height="17" fill="#fff" stroke="#555" stroke-width="1.1"/><path d="M928.5 75.5 V92.5 M940 75.5 V92.5 M922.5 81.2 H945.5 M922.5 87 H945.5" stroke="#555" stroke-width="0.9"/><rect x="928.5" y="81.2" width="11.5" height="5.8" fill="#5aa0e0" stroke="#2a78c6" stroke-width="0.8"/></svg><div class="t" style="left:849.50px;top:102.27px;font-size:9.4px;line-height:11.28px;color:#474747;transform:scaleX(1.063);transform-origin:0 0;">Insert</div><svg class="b" style="left:858px;top:117px" width="8" height="6" viewBox="0 0 8 6" fill="none"><path d="M2 2 L4 4 L6 2" stroke="#444" stroke-width="1.1"/></svg><div class="t" style="left:884.00px;top:102.27px;font-size:9.4px;line-height:11.28px;color:#474747;transform:scaleX(1.030);transform-origin:0 0;">Delete</div><svg class="b" style="left:894px;top:117px" width="8" height="6" viewBox="0 0 8 6" fill="none"><path d="M2 2 L4 4 L6 2" stroke="#444" stroke-width="1.1"/></svg><div class="t" style="left:917.50px;top:101.27px;font-size:9.4px;line-height:11.28px;color:#474747;transform:scaleX(1.041);transform-origin:0 0;">Format</div><svg class="b" style="left:930px;top:116px" width="8" height="6" viewBox="0 0 8 6" fill="none"><path d="M2 2 L4 4 L6 2" stroke="#444" stroke-width="1.1"/></svg><div class="t" style="left:969.00px;top:71.35px;font-size:13px;line-height:15.6px;color:#444;transform:scaleX(1.369);transform-origin:0 0;">Σ</div><svg class="b" style="left:992px;top:76px" width="8" height="6" viewBox="0 0 8 6" fill="none"><path d="M2 2 L4 4 L6 2" stroke="#444" stroke-width="1.1"/></svg><svg class="b" style="left:967px;top:92px" width="16" height="15" viewBox="0 0 16 15" fill="none"><rect x="1" y="1.5" width="13" height="12" stroke="#555" stroke-width="1" fill="#fff"/><path d="M1 3.5 H14" stroke="#555" stroke-width="1.3"/><path d="M7.5 5.5 V11 M5 8.5 L7.5 11 L10 8.5" stroke="#2a78c6" stroke-width="1"/></svg><svg class="b" style="left:986px;top:97px" width="8" height="6" viewBox="0 0 8 6" fill="none"><path d="M2 2 L4 4 L6 2" stroke="#444" stroke-width="1.1"/></svg><svg class="b" style="left:966px;top:112px" width="16" height="16" viewBox="0 0 16 16" fill="none"><path d="M2 9.5 L9 2.5 L14 7.5 L7 14.5 Z" stroke="#a24fc0" stroke-width="1.1" fill="#f3e3f8"/><path d="M2 9.5 L5 6.5 L10 11.5 L7 14.5 Z" fill="#c46ad8" stroke="#a24fc0" stroke-width="1.1"/></svg><svg class="b" style="left:985px;top:118px" width="8" height="6" viewBox="0 0 8 6" fill="none"><path d="M2 2 L4 4 L6 2" stroke="#444" stroke-width="1.1"/></svg><svg class="b" style="left:1010px;top:72px" width="26" height="22" viewBox="0 0 26 22" fill="none"><text x="1" y="9" font-size="10" fill="#2a78c6" font-family="Liberation Sans">A</text><text x="1" y="21" font-size="10" fill="#444" font-family="Liberation Sans">Z</text><path d="M11 6 H25 L20 12 V19 L16 17 V12 Z" stroke="#444" stroke-width="1.1"/></svg><div class="t" style="left:1008.00px;top:101.27px;font-size:9.4px;line-height:11.28px;color:#474747;transform:scaleX(1.072);transform-origin:0 0;">Sort &amp;</div><div class="t" style="left:1006.00px;top:114.27px;font-size:9.4px;line-height:11.28px;color:#474747;transform:scaleX(1.149);transform-origin:0 0;">Filter</div><svg class="b" style="left:1032px;top:116px" width="8" height="6" viewBox="0 0 8 6" fill="none"><path d="M2 2 L4 4 L6 2" stroke="#444" stroke-width="1.1"/></svg><svg class="b" style="left:1048px;top:71px" width="26" height="26" viewBox="0 0 26 26" fill="none"><circle cx="15" cy="10" r="8.5" stroke="#444" stroke-width="1.1"/><path d="M9 16 L2 23" stroke="#444" stroke-width="1.2"/></svg><div class="t" style="left:1046.50px;top:101.27px;font-size:9.4px;line-height:11.28px;color:#474747;transform:scaleX(1.067);transform-origin:0 0;">Find &amp;</div><div class="t" style="left:1043.50px;top:114.27px;font-size:9.4px;line-height:11.28px;color:#474747;transform:scaleX(1.033);transform-origin:0 0;">Select</div><svg class="b" style="left:1071px;top:116px" width="8" height="6" viewBox="0 0 8 6" fill="none"><path d="M2 2 L4 4 L6 2" stroke="#444" stroke-width="1.1"/></svg><svg class="b" style="left:1100px;top:71px" width="26" height="26" viewBox="0 0 26 26" fill="none"><rect x="1.5" y="1.5" width="23" height="23" stroke="#e06c4b" stroke-width="1.2"/><rect x="4.5" y="4.5" width="7.5" height="7.5" stroke="#e06c4b" stroke-width="1.1"/><rect x="14" y="4.5" width="7.5" height="7.5" stroke="#e06c4b" stroke-width="1.1"/><rect x="4.5" y="14" width="7.5" height="7.5" stroke="#e06c4b" stroke-width="1.1"/><rect x="14" y="14" width="7.5" height="7.5" stroke="#e06c4b" stroke-width="1.1"/></svg><div class="t" style="left:1096.00px;top:101.27px;font-size:9.4px;line-height:11.28px;color:#474747;transform:scaleX(1.067);transform-origin:0 0;">Add-ins</div><svg class="b" style="left:1152px;top:71px" width="26" height="26" viewBox="0 0 26 26" fill="none"><rect x="1.5" y="1.5" width="22" height="22" stroke="#555" stroke-width="1.1" fill="#fff"/><path d="M1.5 5 H23.5 M1.5 16 H23.5 M1.5 20 H23.5 M8 16 V23.5 M16 16 V23.5" stroke="#777" stroke-width="0.7"/><circle cx="12" cy="11" r="6" stroke="#555" stroke-width="1.1" fill="#fff"/><rect x="9" y="10" width="1.8" height="4" fill="#5aa0e0"/><rect x="11.3" y="8" width="1.8" height="6" fill="#5aa0e0"/><rect x="13.6" y="9" width="1.8" height="5" fill="#2a78c6"/><path d="M16.5 15.5 L23 22" stroke="#555" stroke-width="1.2"/></svg><div class="t" style="left:1147.50px;top:101.27px;font-size:9.4px;line-height:11.28px;color:#474747;transform:scaleX(0.987);transform-origin:0 0;">Analyse</div><div class="t" style="left:1153.50px;top:114.27px;font-size:9.4px;line-height:11.28px;color:#474747;transform:scaleX(1.058);transform-origin:0 0;">Data</div><svg class="b" style="left:1189px;top:72px" width="27" height="24" viewBox="0 0 27 24" fill="none"><defs><linearGradient id="cp1" x1="0.2" y1="0" x2="0.1" y2="1"><stop offset="0" stop-color="#1a86f0"/><stop offset="0.5" stop-color="#2fbf9a"/><stop offset="1" stop-color="#e9d22e"/></linearGradient><linearGradient id="cp2" x1="0.8" y1="0" x2="0.5" y2="1"><stop offset="0" stop-color="#7a4ff5"/><stop offset="0.5" stop-color="#e056b5"/><stop offset="1" stop-color="#f5773a"/></linearGradient></defs><path d="M2.5 10 Q3.5 3 10 2 H14.5 Q18 2 17 5.5 L13 16 Q11.5 20 8 20 H5.5 Q1.5 20 2 15.5 Z" fill="url(#cp1)"/><path d="M9.5 23 H16 Q21 23 22.5 18.5 L24.5 12 Q25.5 6 21.5 5.5 Q19 5.5 18 9 L14 19.5 Q13 22.5 9.5 23 Z" fill="url(#cp2)"/></svg><div class="t" style="left:1186.00px;top:101.27px;font-size:9.4px;line-height:11.28px;color:#474747;transform:scaleX(1.094);transform-origin:0 0;">Copilot</div><svg class="b" style="left:1256px;top:132px" width="10" height="7" viewBox="0 0 10 7" fill="none"><path d="M1 1.5 L5 5.5 L9 1.5" stroke="#444" stroke-width="1.1"/></svg><svg class="b" style="left:16px;top:154px" width="14" height="13" viewBox="0 0 14 13" fill="none"><path d="M7 1 L13.3 12.3 H0.7 Z" fill="#f3c26b" stroke="#c98a1f" stroke-width="0.9"/><path d="M7 4.5 V8.5" stroke="#4a3510" stroke-width="1.3"/><circle cx="7" cy="10.3" r="0.75" fill="#4a3510"/></svg><div class="t" style="left:37.00px;top:155.12px;font-size:10px;line-height:12.0px;color:#222;transform:scaleX(0.941);transform-origin:0 0;-webkit-text-stroke:0.1px #222;">BACK UP THIS DOCUMENT</div><div class="t" style="left:167.00px;top:155.12px;font-size:10px;line-height:12.0px;color:#333;transform:scaleX(0.989);transform-origin:0 0;">Protect this and other files using OneDrive.</div><div class="b" style="left:363px;top:150px;width:84px;height:22px;background:#fff;border:1px solid #c9c4bd;border-radius:4px"></div><div class="t" style="left:370.00px;top:155.12px;font-size:10px;line-height:12.0px;color:#222;transform:scaleX(0.979);transform-origin:0 0;">Open OneDrive</div><svg class="b" style="left:1254px;top:155px" width="11" height="11" viewBox="0 0 11 11" fill="none"><path d="M1.5 1.5 L9.5 9.5 M9.5 1.5 L1.5 9.5" stroke="#333" stroke-width="1.2"/></svg><div class="b" style="left:8px;top:181px;width:82px;height:18px;background:#fff;border-radius:4px;box-shadow:0 0 0 0.5px #e0dcd9"></div><div class="t" style="left:12.00px;top:183.82px;font-size:10.5px;line-height:12.6px;color:#222;transform:scaleX(0.940);transform-origin:0 0;">F16</div><svg class="b" style="left:78px;top:187px" width="9" height="6" viewBox="0 0 9 6" fill="none"><path d="M1 1 L4.5 4.5 L8 1" stroke="#333" stroke-width="1.1"/></svg><svg class="b" style="left:97px;top:183px" width="6" height="14" viewBox="0 0 6 14" fill="none"><circle cx="3" cy="3" r="1" fill="#444"/><circle cx="3" cy="7" r="1" fill="#444"/><circle cx="3" cy="11" r="1" fill="#444"/></svg><div class="b" style="left:109px;top:181px;width:69px;height:18px;background:#fff;border-radius:4px;box-shadow:0 0 0 0.5px #e0dcd9"></div><svg class="b" style="left:113px;top:184px" width="12" height="12" viewBox="0 0 12 12" fill="none"><path d="M2 2 L10 10 M10 2 L2 10" stroke="#bbb" stroke-width="1"/></svg><svg class="b" style="left:130px;top:184px" width="15" height="12" viewBox="0 0 15 12" fill="none"><path d="M1.5 6 L5 10 L13 2" stroke="#bbb" stroke-width="1"/></svg><div class="t" style="left:152.00px;top:183.44px;font-size:12px;line-height:14.4px;color:#333;font-family:'Liberation Serif',serif; font-style:italic;">fx</div><svg class="b" style="left:168px;top:187px" width="8" height="6" viewBox="0 0 8 6" fill="none"><path d="M1 1 L4 4 L7 1" stroke="#888" stroke-width="1"/></svg><div class="b" style="left:183px;top:181px;width:1090px;height:18px;background:#fff;border-radius:4px;box-shadow:0 0 0 0.5px #e0dcd9"></div><svg class="b" style="left:1261px;top:187px" width="10" height="6" viewBox="0 0 10 6" fill="none"><path d="M1 1 L5 5 L9 1" stroke="#444" stroke-width="1.1"/></svg><div class="b" style="left:1264px;top:206px;width:16px;height:430px;background:#fdfdfd;border-radius:6px 0 0 6px"></div><svg class="b" style="left:1266px;top:209px" width="11" height="8" viewBox="0 0 11 8" fill="none"><path d="M5.5 1 L9.5 6.5 H1.5 Z" fill="#666"/></svg><div class="b" style="left:1268px;top:219px;width:7px;height:383px;background:#6f6f6f;border-radius:3.5px"></div><svg class="b" style="left:1266px;top:626px" width="10" height="8" viewBox="0 0 10 8" fill="none"><path d="M1 1 H9 L5 7 Z" fill="#666"/></svg><div class="b" style="left:0px;top:635px;width:1280px;height:27px;background:#eee8e6"></div><svg class="b" style="left:18px;top:642px" width="10" height="12" viewBox="0 0 10 12" fill="none"><path d="M7 1.5 L2.5 6 L7 10.5" stroke="#444" stroke-width="1.1"/></svg><svg class="b" style="left:46px;top:642px" width="10" height="12" viewBox="0 0 10 12" fill="none"><path d="M3 1.5 L7.5 6 L3 10.5" stroke="#999" stroke-width="1.1"/></svg><svg class="b" style="left:71px;top:645px" width="12" height="5" viewBox="0 0 12 5" fill="none"><circle cx="2" cy="2.5" r="1.2" fill="#333"/><circle cx="6" cy="2.5" r="1.2" fill="#333"/><circle cx="10" cy="2.5" r="1.2" fill="#333"/></svg><div class="t" style="left:102.00px;top:642.91px;font-size:11.2px;line-height:13.44px;color:#333;transform:scaleX(1.049);transform-origin:0 0;">quick test totals</div><div class="t" style="left:205.00px;top:642.91px;font-size:11.2px;line-height:13.44px;color:#333;">use</div><div class="t" style="left:245.00px;top:642.91px;font-size:11.2px;line-height:13.44px;color:#333;transform:scaleX(1.017);transform-origin:0 0;">10 team test RUN 2</div><div class="t" style="left:551.00px;top:642.91px;font-size:11.2px;line-height:13.44px;color:#333;transform:scaleX(1.051);transform-origin:0 0;">underdog test</div><div class="t" style="left:647.00px;top:642.91px;font-size:11.2px;line-height:13.44px;color:#333;transform:scaleX(0.982);transform-origin:0 0;">Full stats</div><div class="b" style="left:195px;top:641px;width:1px;height:15px;background:#d7d2ce"></div><div class="b" style="left:233px;top:641px;width:1px;height:15px;background:#d7d2ce"></div><div class="b" style="left:635px;top:641px;width:1px;height:15px;background:#d7d2ce"></div><div class="b" style="left:702px;top:641px;width:1px;height:15px;background:#d7d2ce"></div><div class="b" style="left:359px;top:635px;width:177px;height:25px;background:#fff;border-radius:0 0 6px 6px"></div><div class="t" style="left:366.00px;top:641.03px;font-size:11px;line-height:13.2px;color:#222;transform:scaleX(0.985);transform-origin:0 0;-webkit-text-stroke:0.25px #222;">TOP DOUBLE TEST 532 GAMES</div><div class="b" style="left:366px;top:655px;width:163px;height:2px;background:#3f8a5c;border-radius:1px"></div><svg class="b" style="left:735px;top:641px" width="14" height="14" viewBox="0 0 14 14" fill="none"><path d="M7 1.5 V12.5 M1.5 7 H12.5" stroke="#444" stroke-width="1.2"/></svg><svg class="b" style="left:767px;top:642px" width="6" height="12" viewBox="0 0 6 12" fill="none"><circle cx="3" cy="2" r="1" fill="#444"/><circle cx="3" cy="6" r="1" fill="#444"/><circle cx="3" cy="10" r="1" fill="#444"/></svg><div class="b" style="left:784px;top:640px;width:480px;height:17px;background:#fff;border-radius:8px"></div><svg class="b" style="left:786px;top:644px" width="8" height="9" viewBox="0 0 8 9" fill="none"><path d="M6.5 1 L1.5 4.5 L6.5 8 Z" fill="#555"/></svg><div class="b" style="left:798px;top:644px;width:437px;height:8px;background:#6e6e6e;border-radius:4px"></div><svg class="b" style="left:1253px;top:644px" width="8" height="9" viewBox="0 0 8 9" fill="none"><path d="M1.5 1 L6.5 4.5 L1.5 8 Z" fill="#555"/></svg><div class="b" style="left:0px;top:661px;width:1280px;height:19px;background:#f4f3f3"></div><div class="b" style="left:0px;top:678px;width:1280px;height:2px;background:#fbfbfb"></div><div class="t" style="left:9.00px;top:665.91px;font-size:9.5px;line-height:11.4px;color:#333;transform:scaleX(0.874);transform-origin:0 0;">Ready</div><svg class="b" style="left:49px;top:664px" width="13" height="13" viewBox="0 0 13 13" fill="none"><circle cx="6.5" cy="2.5" r="1.6" stroke="#444" stroke-width="0.9"/><path d="M1 5 H12 M6.5 5 V8.5 L3.5 12 M6.5 8.5 L9.5 12" stroke="#444" stroke-width="0.9"/><path d="M8 9 L12 13 M12 9 L8 13" stroke="#444" stroke-width="0.9"/></svg><div class="t" style="left:65.00px;top:665.91px;font-size:9.5px;line-height:11.4px;color:#222;font-weight:bold;transform:scaleX(0.890);transform-origin:0 0;">Accessibility: Investigate</div><div class="b" style="left:1032px;top:661px;width:33px;height:19px;background:#e3e1df"></div><svg class="b" style="left:1041px;top:664px" width="14" height="13" viewBox="0 0 14 13" fill="none"><rect x="1" y="1" width="12" height="11" stroke="#444" stroke-width="1"/><path d="M1 4.7 H13 M1 8.3 H13 M5 1 V12 M9 1 V12" stroke="#444" stroke-width="0.9"/></svg><svg class="b" style="left:1075px;top:664px" width="14" height="13" viewBox="0 0 14 13" fill="none"><rect x="1" y="1" width="12" height="11" stroke="#444" stroke-width="1"/><rect x="3.5" y="3" width="7" height="7" stroke="#444" stroke-width="0.8"/><path d="M5 5 H9 M5 7 H9" stroke="#444" stroke-width="0.6"/></svg><svg class="b" style="left:1108px;top:664px" width="14" height="13" viewBox="0 0 14 13" fill="none"><rect x="1" y="1" width="12" height="11" stroke="#444" stroke-width="1"/><path d="M6 1 V7 H1 M6 7 V12" stroke="#444" stroke-width="1"/></svg><div class="b" style="left:1136px;top:670px;width:7px;height:1px;background:#555"></div><div class="b" style="left:1148px;top:670px;width:82px;height:1px;background:#777"></div><div class="b" style="left:1187px;top:665px;width:4px;height:11px;background:#555;border-radius:1px"></div><svg class="b" style="left:1233px;top:666px" width="9" height="9" viewBox="0 0 9 9" fill="none"><path d="M4.5 0.5 V8.5 M0.5 4.5 H8.5" stroke="#555" stroke-width="1"/></svg><div class="t" style="left:1252.00px;top:665.91px;font-size:9.5px;line-height:11.4px;color:#333;transform:scaleX(0.864);transform-origin:0 0;">100%</div><div class="b" style="left:0px;top:680px;width:1280px;height:40px;background:#2e1f1b"></div><svg class="b" style="left:16px;top:686px" width="26" height="26" viewBox="0 0 26 26" fill="none"><defs><radialGradient id="sun" cx="0.4" cy="0.4" r="0.7"><stop offset="0" stop-color="#ffd24a"/><stop offset="1" stop-color="#f07b1a"/></radialGradient></defs><circle cx="11" cy="16" r="8.5" fill="url(#sun)"/><circle cx="16.5" cy="6.5" r="5.8" fill="#c4262e"/></svg><div class="t" style="left:30.14px;top:687.00px;font-size:8.5px;line-height:10.2px;color:#fff;">6</div><div class="t" style="left:43.00px;top:687.62px;font-size:10px;line-height:12.0px;color:#f2f2f2;transform:scaleX(0.895);transform-origin:0 0;">19°C</div><div class="t" style="left:43.00px;top:701.12px;font-size:10px;line-height:12.0px;color:#d0c8c5;transform:scaleX(0.952);transform-origin:0 0;">Sunny</div><svg class="b" style="left:315px;top:689px" width="22" height="22" viewBox="0 0 22 22" fill="none"><defs><linearGradient id="win" x1="0" y1="0" x2="1" y2="1"><stop offset="0" stop-color="#6ad3ff"/><stop offset="1" stop-color="#1d9ae6"/></linearGradient></defs><rect x="1" y="1" width="9.5" height="9.5" fill="url(#win)"/><rect x="11.5" y="1" width="9.5" height="9.5" fill="url(#win)"/><rect x="1" y="11.5" width="9.5" height="9.5" fill="url(#win)"/><rect x="11.5" y="11.5" width="9.5" height="9.5" fill="url(#win)"/></svg><div class="b" style="left:348px;top:687px;width:183px;height:26px;background:#f2efee;border-radius:13px"></div><svg class="b" style="left:356px;top:692px" width="16" height="16" viewBox="0 0 16 16" fill="none"><circle cx="7" cy="7" r="5" stroke="#222" stroke-width="1.6"/><path d="M10.5 10.5 L14.5 14.5" stroke="#222" stroke-width="1.7"/></svg><div class="t" style="left:378.00px;top:693.53px;font-size:11px;line-height:13.2px;color:#555;transform:scaleX(0.975);transform-origin:0 0;">Search</div><svg class="b" style="left:488px;top:689px" width="40" height="22" viewBox="0 0 40 22" fill="none"><ellipse cx="20" cy="19" rx="19" ry="2.5" fill="#a5b86a"/><ellipse cx="10" cy="12" rx="5" ry="6" fill="#8f8a86"/><ellipse cx="26" cy="12" rx="9" ry="6.5" fill="#9a948f"/><rect x="7" y="14" width="2" height="6" fill="#7d7874"/><rect x="20" y="14" width="2.5" height="6" fill="#857f7a"/><rect x="29" y="14" width="2.5" height="6" fill="#857f7a"/></svg><svg class="b" style="left:540px;top:689px" width="22" height="21" viewBox="0 0 22 21" fill="none"><rect x="7" y="1" width="14" height="12" rx="1.5" fill="#e6e6e6"/><rect x="1" y="7" width="14" height="13" rx="1.5" fill="#7a7a7a"/><rect x="5" y="7" width="10" height="6" fill="#b9b9b9"/></svg><svg class="b" style="left:576px;top:688px" width="24" height="24" viewBox="0 0 24 24" fill="none"><defs><linearGradient id="cpa" x1="0.2" y1="0" x2="0.1" y2="1"><stop offset="0" stop-color="#1a86f0"/><stop offset="0.5" stop-color="#2fbf9a"/><stop offset="1" stop-color="#e9d22e"/></linearGradient><linearGradient id="cpb" x1="0.8" y1="0" x2="0.5" y2="1"><stop offset="0" stop-color="#7a4ff5"/><stop offset="0.5" stop-color="#e056b5"/><stop offset="1" stop-color="#f5773a"/></linearGradient></defs><g transform="scale(0.88)"><path d="M2.5 10 Q3.5 3 10 2 H14.5 Q18 2 17 5.5 L13 16 Q11.5 20 8 20 H5.5 Q1.5 20 2 15.5 Z" fill="url(#cpa)"/><path d="M9.5 23 H16 Q21 23 22.5 18.5 L24.5 12 Q25.5 6 21.5 5.5 Q19 5.5 18 9 L14 19.5 Q13 22.5 9.5 23 Z" fill="url(#cpb)"/></g></svg><svg class="b" style="left:613px;top:689px" width="23" height="22" viewBox="0 0 23 22" fill="none"><circle cx="17" cy="5" r="3" fill="#7b83eb"/><rect x="13" y="9" width="9" height="9" rx="3" fill="#7b83eb"/><circle cx="11" cy="4.5" r="3.5" fill="#5059c9"/><rect x="6" y="8" width="11" height="12" rx="2" fill="#5059c9"/><rect x="1" y="6" width="10" height="10" rx="1.2" fill="#4b53bc"/><path d="M3.5 8.5 H8.5 M6 8.5 V14" stroke="#fff" stroke-width="1.4"/></svg><svg class="b" style="left:649px;top:690px" width="22" height="19" viewBox="0 0 22 19" fill="none"><path d="M1 3 Q1 1 3 1 H8 L10 3 H19 Q21 3 21 5 V17 Q21 18 20 18 H2 Q1 18 1 17 Z" fill="#f5b821"/><rect x="1" y="6" width="20" height="12" rx="1" fill="#ffd04a"/><rect x="6" y="12" width="10" height="3" fill="#2f7fd6"/></svg><svg class="b" style="left:686px;top:688px" width="22" height="22" viewBox="0 0 22 22" fill="none"><path d="M7 5 Q7 1.5 11 1.5 Q15 1.5 15 5" stroke="#3a8ee6" stroke-width="1.3"/><rect x="2" y="5" width="18" height="15" rx="2.5" fill="#f2f2f2"/><rect x="7" y="9" width="3.5" height="3.5" fill="#f25022"/><rect x="11.5" y="9" width="3.5" height="3.5" fill="#7fba00"/><rect x="7" y="13.5" width="3.5" height="3.5" fill="#00a4ef"/><rect x="11.5" y="13.5" width="3.5" height="3.5" fill="#ffb900"/></svg><svg class="b" style="left:723px;top:689px" width="20" height="22" viewBox="0 0 20 22" fill="none"><path d="M10 1 L19 6 V16 L10 21 L1 16 V6 Z" fill="#6b6b6b"/><path d="M10 5 L15 14 H5 Z" fill="#cfcfcf"/><path d="M10 9 L13 14 H7 Z" fill="#444"/></svg><svg class="b" style="left:759px;top:688px" width="23" height="23" viewBox="0 0 23 23" fill="none"><defs><linearGradient id="edg" x1="0" y1="0" x2="1" y2="1"><stop offset="0" stop-color="#36c2a8"/><stop offset="0.5" stop-color="#1a8fd6"/><stop offset="1" stop-color="#0d5fb3"/></linearGradient></defs><circle cx="11.5" cy="11.5" r="10.5" fill="url(#edg)"/><path d="M6 13 Q7 7 13 7 Q18 7 18 11 Q18 13 14 13 H9 Q10 17 15 17 Q18 17 20 15 Q18 21 11.5 21 Q5 20 6 13Z" fill="#2e1f1b" opacity="0.55"/></svg><svg class="b" style="left:795px;top:689px" width="23" height="21" viewBox="0 0 23 21" fill="none"><rect x="8" y="3" width="14" height="15" rx="1.5" fill="#28a8ea"/><rect x="8" y="10" width="14" height="8" fill="#0a64ad"/><rect x="1" y="5" width="11" height="11" rx="1.5" fill="#0f6cbd"/><circle cx="6.5" cy="10.5" r="3" stroke="#fff" stroke-width="1.5"/></svg><div class="b" style="left:827px;top:683px;width:34px;height:33px;background:#6b3b3b;border-radius:5px"></div><svg class="b" style="left:833px;top:689px" width="22" height="22" viewBox="0 0 22 22" fill="none"><ellipse cx="11" cy="11" rx="9.5" ry="10" fill="#ff1b2d"/><ellipse cx="11" cy="11" rx="4.3" ry="7.2" fill="#6b3b3b"/></svg><div class="b" style="left:840px;top:713px;width:8px;height:2px;background:#c9a0a0;border-radius:1px"></div><svg class="b" style="left:869px;top:689px" width="22" height="22" viewBox="0 0 22 22" fill="none"><defs><linearGradient id="stm" x1="0" y1="0" x2="0" y2="1"><stop offset="0" stop-color="#1c9ae0"/><stop offset="1" stop-color="#1a2f5a"/></linearGradient></defs><circle cx="11" cy="11" r="10.5" fill="url(#stm)"/><circle cx="14.5" cy="8" r="3.5" stroke="#fff" stroke-width="1.4"/><circle cx="8" cy="14" r="2.6" fill="#fff"/><path d="M1 11 L8 14 L13 9" stroke="#fff" stroke-width="1.6"/></svg><svg class="b" style="left:905px;top:688px" width="24" height="24" viewBox="0 0 24 24" fill="none"><circle cx="12" cy="12" r="11" fill="#2a1a4f"/><text x="4" y="17" font-size="13" font-weight="bold" fill="#fff" font-family="Liberation Sans">24</text><path d="M4 4 L8 9" stroke="#b04ad8" stroke-width="2"/></svg><div class="b" style="left:937px;top:683px;width:33px;height:33px;background:#4a3a36;border-radius:5px"></div><svg class="b" style="left:942px;top:688px" width="23" height="22" viewBox="0 0 23 22" fill="none"><rect x="6" y="2" width="16" height="18" rx="1.5" fill="#21a366"/><rect x="6" y="2" width="16" height="6" fill="#33c481"/><rect x="6" y="14" width="16" height="6" fill="#107c41"/><rect x="1" y="6" width="11" height="11" rx="1.3" fill="#107c41"/><path d="M4 8.5 L9 14.5 M9 8.5 L4 14.5" stroke="#fff" stroke-width="1.5"/></svg><div class="b" style="left:945px;top:713px;width:17px;height:3px;background:#4fb3f0;border-radius:1.5px"></div><div class="b" style="left:728px;top:713px;width:6px;height:2px;background:#9a8f8c;border-radius:1px"></div><div class="b" style="left:767px;top:713px;width:6px;height:2px;background:#9a8f8c;border-radius:1px"></div><div class="b" style="left:877px;top:713px;width:6px;height:2px;background:#9a8f8c;border-radius:1px"></div><div class="b" style="left:914px;top:713px;width:6px;height:2px;background:#9a8f8c;border-radius:1px"></div><svg class="b" style="left:1119px;top:695px" width="13" height="9" viewBox="0 0 13 9" fill="none"><path d="M1.5 7.5 L6.5 2 L11.5 7.5" stroke="#fff" stroke-width="1.3"/></svg><svg class="b" style="left:1143px;top:691px" width="18" height="17" viewBox="0 0 18 17" fill="none"><path d="M1.5 6.5 Q9 -1 16.5 6.5" stroke="#fff" stroke-width="1.4"/><path d="M4 9 Q9 4 14 9" stroke="#fff" stroke-width="1.4"/><path d="M6.5 11.5 Q9 9.5 11.5 11.5" stroke="#fff" stroke-width="1.4"/><circle cx="9" cy="14" r="1.3" fill="#fff"/></svg><svg class="b" style="left:1163px;top:692px" width="18" height="15" viewBox="0 0 18 15" fill="none"><path d="M1.5 5 H4.5 L8 2 V13 L4.5 10 H1.5 Z" stroke="#fff" stroke-width="1.2"/><path d="M11 5 L15 9.5 M15 5 L11 9.5" stroke="#fff" stroke-width="1.2"/></svg><svg class="b" style="left:1183px;top:691px" width="18" height="16" viewBox="0 0 18 16" fill="none"><rect x="1.5" y="4" width="13" height="9" rx="1.5" stroke="#fff" stroke-width="1.2"/><rect x="15" y="7" width="2" height="3" fill="#fff"/><path d="M6 2 L3.5 8 H6.5 L4.5 13" stroke="#fff" stroke-width="1.1"/><rect x="3" y="6" width="6" height="5" fill="#fff"/></svg><div class="t" style="left:1239.50px;top:687.91px;font-size:10px;line-height:12.0px;color:#f2f2f2;transform:scaleX(0.959);transform-origin:0 0;">15:17</div><div class="t" style="left:1212.50px;top:700.62px;font-size:10px;line-height:12.0px;color:#f2f2f2;transform:scaleX(1.019);transform-origin:0 0;">16/05/2025</div>
</body></html>
